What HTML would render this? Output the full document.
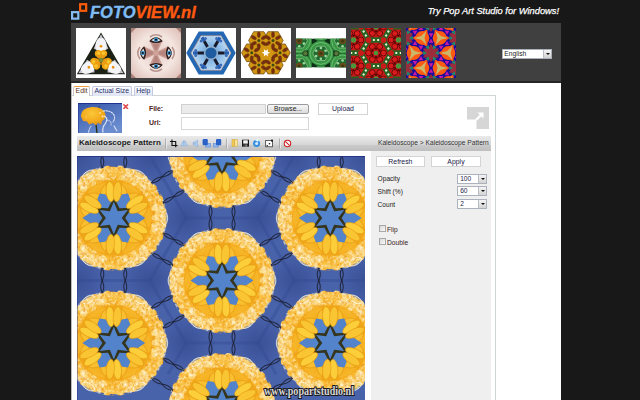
<!DOCTYPE html>
<html><head><meta charset="utf-8"><title>FOTOVIEW.nl</title>
<style>
*{margin:0;padding:0;box-sizing:border-box}
html,body{width:640px;height:400px;overflow:hidden}
body{background:#181818;font-family:"Liberation Sans",Arial,sans-serif;position:relative;color:#222}
.abs{position:absolute}
#logo{left:90px;top:1.5px;font-size:16.5px;font-weight:bold;font-style:italic;line-height:20px;letter-spacing:0;white-space:nowrap;color:#7fbcf6;-webkit-text-stroke:.35px #7fbcf6}
#logo b{color:#ff5a10;-webkit-text-stroke:.35px #ff5a10}
#sq1{left:71px;top:11px;width:8.5px;height:8.6px;border:2.2px solid #86bdf0}
#sq2{left:79px;top:3px;width:8.4px;height:8.8px;border:2.2px solid #ff5c0a}
#try{right:81px;top:4.6px;font-size:9.3px;font-style:italic;color:#fff;-webkit-text-stroke:.25px #fff;line-height:12px;white-space:nowrap}
#strip{left:71px;top:23px;width:490px;height:59px;background:#404040}
#stripsh{left:71px;top:81px;width:490px;height:2px;background:#262626}
.th{position:absolute;top:28px;width:50px;height:50px;overflow:hidden}
.th svg{display:block}
#lang{left:502px;top:48.5px;width:50px;height:10px;background:#fff;border:1px solid #aab0ba;font-size:6.7px;line-height:8px;padding-left:1.3px;color:#222}
#lang i{position:absolute;right:0;top:0;width:8px;height:8px;background:linear-gradient(#f4f4f4,#d0d0d0);border-left:1px solid #b8bcc4}
#lang i:after,.sel i:after{content:"";position:absolute;left:2px;top:3px;border:2px solid transparent;border-top:2.5px solid #111}
#main{left:71px;top:83px;width:490px;height:320px;background:#fff}
#leftb{left:71px;top:83px;width:1px;height:320px;background:#bbb}
#panel{left:72px;top:95px;width:424px;height:310px;border:1px solid #cfd4d7;border-left:none;border-bottom:none}
.tab{position:absolute;top:85.5px;height:10px;border:1px solid #c3c8de;border-bottom:none;border-radius:2px 2px 0 0;background:linear-gradient(#fdfdff,#dfe3f3);font-size:6.9px;line-height:8px;text-align:center;color:#26306a;white-space:nowrap}
#t1{left:73px;width:17px;background:#fff;border-color:#c8c8c8;border-top:1px solid #f0a040;color:#5a3020;height:10.5px}
#t2{left:92px;width:39.5px}
#t3{left:133.5px;width:19.5px}
#sf{left:77.8px;top:103px;width:44.3px;height:30px}
#redx{left:123.4px;top:103.5px;width:5.4px;height:5.4px}
.lbl{position:absolute;left:149px;font-size:6.9px;font-weight:bold;color:#4a2020;line-height:9px}
#fin{left:181.3px;top:104.4px;width:84.3px;height:9.4px;background:#ebebeb;border:1px solid #d0d0d0}
#browse{left:267.2px;top:104.4px;width:41.6px;height:9.4px;border:1px solid #9a9a9a;border-radius:2px;background:linear-gradient(#f6f6f6,#dcdcdc);font-size:6.7px;line-height:7.6px;text-align:center;color:#222}
#uin{left:181.3px;top:116.9px;width:127.5px;height:12.8px;background:#fff;border:1px solid #d8d8d8}
.btn{position:absolute;background:#fff;border:1px solid #d4d4d4;font-size:6.9px;text-align:center;color:#20204a}
#upload{left:318.1px;top:103px;width:49.8px;height:12px;line-height:9.8px}
#tb{left:77px;top:136px;width:413.5px;height:14.8px;background:linear-gradient(#ebebeb 0%,#d5d5d5 60%,#c8c8c8 64%,#bfbfbf 100%)}
#title{left:79px;top:137.2px;font-size:8px;font-weight:bold;line-height:12px;color:#1a1a1a;white-space:nowrap}
#crumb{left:377.5px;top:138px;width:111.3px;font-size:6.66px;line-height:10px;color:#333;white-space:nowrap;text-align:right}
#icons{left:164px;top:136px}
#kal{left:77px;top:156px}
#side{left:370.6px;top:150.8px;width:120px;height:250px;background:#efefef}
#refresh{left:375.5px;top:156.3px;width:49.8px;height:10.4px;line-height:9.4px}
#apply{left:431.3px;top:156.3px;width:49.4px;height:10.4px;line-height:9.4px}
.sl{position:absolute;left:377.6px;font-size:6.6px;line-height:9px;color:#222}
.sel{position:absolute;left:457.4px;width:29.6px;height:9.6px;background:#fff;border:1px solid #abb2bd;font-size:6.6px;line-height:7.8px;padding-left:1.8px;color:#1a1a4a}
.sel i{position:absolute;right:0;top:0;width:7.5px;height:7.6px;background:linear-gradient(#f4f4f4,#d4d4d4);border-left:1px solid #b8bcc4}
.sel i:after{left:1.6px;top:2.8px}
.cb{position:absolute;left:379.2px;width:6.4px;height:6.4px;border:1px solid #a8a8a8;background:linear-gradient(135deg,#d8d8d8,#fafafa)}
.cl{position:absolute;left:387px;font-size:6.7px;line-height:9px;color:#3a1a1a}
#arr{left:467px;top:107px}
</style></head><body>
<svg class="abs" style="left:68px;top:0" width="24" height="24" viewBox="68 0 24 24"><rect x="72.1" y="12.15" width="6.2" height="6.5" fill="none" stroke="#86bdf0" stroke-width="2.2"/><rect x="80.15" y="4.2" width="6.0" height="6.6" fill="none" stroke="#ff5c0a" stroke-width="2.2"/></svg>
<div class="abs" id="logo">FOTO<b>VIEW.nl</b></div>
<div class="abs" id="try">Try Pop Art Studio for Windows!</div>
<div class="abs" id="strip"></div><div class="abs" id="stripsh"></div>
<div class="th" style="left:76px"><svg width="50" height="50" viewBox="0 0 50 50"><rect width="50" height="50" fill="#fff"/><polygon points="25,4.6 0.8,46.2 49.2,46.2" fill="#1b2115"/><g transform="rotate(0 25 32.3)"><polygon points="25,6.2 17.6,20.5 25,24.6 32.4,20.5" fill="#c4c4cf"/><ellipse cx="22.6" cy="16" rx="3" ry="6.2" fill="#f4f4f8" transform="rotate(14 22.6 16)"/><ellipse cx="27.4" cy="16" rx="3" ry="6.2" fill="#f4f4f8" transform="rotate(-14 27.4 16)"/><ellipse cx="25" cy="20.6" rx="2.6" ry="3" fill="#fbfbfd"/><circle cx="25" cy="18.3" r="1.4" fill="#e8901a"/><circle cx="22.3" cy="25.6" r="3.5" fill="#f0a512"/><circle cx="27.7" cy="25.6" r="3.5" fill="#f0a512"/><ellipse cx="25" cy="28" rx="4.2" ry="3" fill="#eb9c10"/><circle cx="22.6" cy="25.2" r="1.7" fill="#f9c630"/><circle cx="27.4" cy="25.2" r="1.7" fill="#f9c630"/></g><g transform="rotate(120 25 32.3)"><polygon points="25,6.2 17.6,20.5 25,24.6 32.4,20.5" fill="#c4c4cf"/><ellipse cx="22.6" cy="16" rx="3" ry="6.2" fill="#f4f4f8" transform="rotate(14 22.6 16)"/><ellipse cx="27.4" cy="16" rx="3" ry="6.2" fill="#f4f4f8" transform="rotate(-14 27.4 16)"/><ellipse cx="25" cy="20.6" rx="2.6" ry="3" fill="#fbfbfd"/><circle cx="25" cy="18.3" r="1.4" fill="#e8901a"/><circle cx="22.3" cy="25.6" r="3.5" fill="#f0a512"/><circle cx="27.7" cy="25.6" r="3.5" fill="#f0a512"/><ellipse cx="25" cy="28" rx="4.2" ry="3" fill="#eb9c10"/><circle cx="22.6" cy="25.2" r="1.7" fill="#f9c630"/><circle cx="27.4" cy="25.2" r="1.7" fill="#f9c630"/></g><g transform="rotate(240 25 32.3)"><polygon points="25,6.2 17.6,20.5 25,24.6 32.4,20.5" fill="#c4c4cf"/><ellipse cx="22.6" cy="16" rx="3" ry="6.2" fill="#f4f4f8" transform="rotate(14 22.6 16)"/><ellipse cx="27.4" cy="16" rx="3" ry="6.2" fill="#f4f4f8" transform="rotate(-14 27.4 16)"/><ellipse cx="25" cy="20.6" rx="2.6" ry="3" fill="#fbfbfd"/><circle cx="25" cy="18.3" r="1.4" fill="#e8901a"/><circle cx="22.3" cy="25.6" r="3.5" fill="#f0a512"/><circle cx="27.7" cy="25.6" r="3.5" fill="#f0a512"/><ellipse cx="25" cy="28" rx="4.2" ry="3" fill="#eb9c10"/><circle cx="22.6" cy="25.2" r="1.7" fill="#f9c630"/><circle cx="27.4" cy="25.2" r="1.7" fill="#f9c630"/></g><circle cx="25" cy="32.1" r="2.3" fill="#7a8a34"/></svg></div><div class="th" style="left:131px"><svg width="50" height="50" viewBox="0 0 50 50"><defs><radialGradient id="skin" cx=".5" cy=".5" r=".72"><stop offset="0" stop-color="#e9d0c9"/><stop offset=".5" stop-color="#f4e6e1"/><stop offset=".85" stop-color="#e2c6be"/><stop offset="1" stop-color="#cfaaa0"/></radialGradient></defs><rect width="50" height="50" fill="url(#skin)"/><path d="M0 0H5L0 5ZM50 0H45L50 5ZM0 50H5L0 45ZM50 50H45L50 45Z" fill="#a88078"/><g transform="rotate(0 25 25)"><path d="M19 9 Q25 4.5 31 9" fill="none" stroke="#a98078" stroke-width="1.6" stroke-opacity=".8"/><path d="M23.6 24 L18.6 13 Q25 6 31.4 13 L26.4 24 Z" fill="#c99b93"/><path d="M24 22 L21.6 15.5 H28.4 L26 22 Z" fill="#b5847c"/><path d="M18.2 13.2 Q25 5.2 31.8 13.2 Q25 17 18.2 13.2Z" fill="#2c1b1a"/><path d="M20.4 12.3 Q25 8 29.6 12.3 Q25 14.8 20.4 12.3Z" fill="#eceff2"/><circle cx="25" cy="11.7" r="2.35" fill="#4690c2"/><circle cx="25" cy="11.7" r="1.05" fill="#0c1118"/></g><g transform="rotate(90 25 25)"><path d="M19 9 Q25 4.5 31 9" fill="none" stroke="#a98078" stroke-width="1.6" stroke-opacity=".8"/><path d="M23.6 24 L18.6 13 Q25 6 31.4 13 L26.4 24 Z" fill="#c99b93"/><path d="M24 22 L21.6 15.5 H28.4 L26 22 Z" fill="#b5847c"/><path d="M18.2 13.2 Q25 5.2 31.8 13.2 Q25 17 18.2 13.2Z" fill="#2c1b1a"/><path d="M20.4 12.3 Q25 8 29.6 12.3 Q25 14.8 20.4 12.3Z" fill="#eceff2"/><circle cx="25" cy="11.7" r="2.35" fill="#4690c2"/><circle cx="25" cy="11.7" r="1.05" fill="#0c1118"/></g><g transform="rotate(180 25 25)"><path d="M19 9 Q25 4.5 31 9" fill="none" stroke="#a98078" stroke-width="1.6" stroke-opacity=".8"/><path d="M23.6 24 L18.6 13 Q25 6 31.4 13 L26.4 24 Z" fill="#c99b93"/><path d="M24 22 L21.6 15.5 H28.4 L26 22 Z" fill="#b5847c"/><path d="M18.2 13.2 Q25 5.2 31.8 13.2 Q25 17 18.2 13.2Z" fill="#2c1b1a"/><path d="M20.4 12.3 Q25 8 29.6 12.3 Q25 14.8 20.4 12.3Z" fill="#eceff2"/><circle cx="25" cy="11.7" r="2.35" fill="#4690c2"/><circle cx="25" cy="11.7" r="1.05" fill="#0c1118"/></g><g transform="rotate(270 25 25)"><path d="M19 9 Q25 4.5 31 9" fill="none" stroke="#a98078" stroke-width="1.6" stroke-opacity=".8"/><path d="M23.6 24 L18.6 13 Q25 6 31.4 13 L26.4 24 Z" fill="#c99b93"/><path d="M24 22 L21.6 15.5 H28.4 L26 22 Z" fill="#b5847c"/><path d="M18.2 13.2 Q25 5.2 31.8 13.2 Q25 17 18.2 13.2Z" fill="#2c1b1a"/><path d="M20.4 12.3 Q25 8 29.6 12.3 Q25 14.8 20.4 12.3Z" fill="#eceff2"/><circle cx="25" cy="11.7" r="2.35" fill="#4690c2"/><circle cx="25" cy="11.7" r="1.05" fill="#0c1118"/></g><circle cx="25" cy="25" r="2.2" fill="#cfa199"/></svg></div><div class="th" style="left:186px"><svg width="50" height="50" viewBox="0 0 50 50"><defs><radialGradient id="t3g" cx="25" cy="25" r="20" gradientUnits="userSpaceOnUse"><stop offset="0" stop-color="#5f9ad4"/><stop offset=".5" stop-color="#8fbde8"/><stop offset="1" stop-color="#c9e0f5"/></radialGradient></defs><rect width="50" height="50" fill="#fff"/><polygon points="49.70,25.00 37.35,3.61 12.65,3.61 0.30,25.00 12.65,46.39 37.35,46.39" fill="#2468b4"/><polygon points="45.00,25.00 35.00,7.68 15.00,7.68 5.00,25.00 15.00,42.32 35.00,42.32" fill="url(#t3g)" stroke="#c98a6a" stroke-width=".5"/><line x1="38.5" y1="25.0" x2="43.0" y2="25.0" stroke="#2a5cae" stroke-width="3.2"/><line x1="30.0" y1="25.0" x2="38.5" y2="25.0" stroke="#17192a" stroke-width="3"/><circle cx="40.3" cy="27.4" r="1.5" fill="#3a6cb8"/><circle cx="40.3" cy="22.6" r="1.5" fill="#3a6cb8"/><line x1="31.8" y1="13.3" x2="34.0" y2="9.4" stroke="#2a5cae" stroke-width="3.2"/><line x1="27.5" y1="20.7" x2="31.8" y2="13.3" stroke="#17192a" stroke-width="3"/><circle cx="34.8" cy="13.0" r="1.5" fill="#3a6cb8"/><circle cx="30.6" cy="10.5" r="1.5" fill="#3a6cb8"/><line x1="18.3" y1="13.3" x2="16.0" y2="9.4" stroke="#2a5cae" stroke-width="3.2"/><line x1="22.5" y1="20.7" x2="18.3" y2="13.3" stroke="#17192a" stroke-width="3"/><circle cx="19.4" cy="10.5" r="1.5" fill="#3a6cb8"/><circle cx="15.2" cy="13.0" r="1.5" fill="#3a6cb8"/><line x1="11.5" y1="25.0" x2="7.0" y2="25.0" stroke="#2a5cae" stroke-width="3.2"/><line x1="20.0" y1="25.0" x2="11.5" y2="25.0" stroke="#17192a" stroke-width="3"/><circle cx="9.7" cy="22.6" r="1.5" fill="#3a6cb8"/><circle cx="9.7" cy="27.4" r="1.5" fill="#3a6cb8"/><line x1="18.2" y1="36.7" x2="16.0" y2="40.6" stroke="#2a5cae" stroke-width="3.2"/><line x1="22.5" y1="29.3" x2="18.2" y2="36.7" stroke="#17192a" stroke-width="3"/><circle cx="15.2" cy="37.0" r="1.5" fill="#3a6cb8"/><circle cx="19.4" cy="39.5" r="1.5" fill="#3a6cb8"/><line x1="31.8" y1="36.7" x2="34.0" y2="40.6" stroke="#2a5cae" stroke-width="3.2"/><line x1="27.5" y1="29.3" x2="31.8" y2="36.7" stroke="#17192a" stroke-width="3"/><circle cx="30.6" cy="39.5" r="1.5" fill="#3a6cb8"/><circle cx="34.8" cy="37.0" r="1.5" fill="#3a6cb8"/><circle cx="25" cy="25" r="7.2" fill="#8fb0d0"/><circle cx="25" cy="25" r="5.6" fill="#1f5c9f"/></svg></div><div class="th" style="left:241px"><svg width="50" height="50" viewBox="0 0 50 50"><rect width="50" height="50" fill="#fff"/><polygon points="49.30,24.80 44.20,15.97 34.00,15.97 28.90,24.80 34.00,33.63 44.20,33.63" fill="#d39612" stroke="#6a420a" stroke-width=".7"/><polygon points="42.20,12.50 37.10,3.67 26.90,3.67 21.80,12.50 26.90,21.34 37.10,21.34" fill="#d39612" stroke="#6a420a" stroke-width=".7"/><polygon points="28.00,12.50 22.90,3.67 12.70,3.67 7.60,12.50 12.70,21.34 22.90,21.34" fill="#d39612" stroke="#6a420a" stroke-width=".7"/><polygon points="20.90,24.80 15.80,15.97 5.60,15.97 0.50,24.80 5.60,33.63 15.80,33.63" fill="#d39612" stroke="#6a420a" stroke-width=".7"/><polygon points="28.00,37.10 22.90,28.26 12.70,28.26 7.60,37.10 12.70,45.93 22.90,45.93" fill="#d39612" stroke="#6a420a" stroke-width=".7"/><polygon points="42.20,37.10 37.10,28.26 26.90,28.26 21.80,37.10 26.90,45.93 37.10,45.93" fill="#d39612" stroke="#6a420a" stroke-width=".7"/><circle cx="24.9" cy="24.8" r="9" fill="#d39612"/><ellipse cx="44.2" cy="21.9" rx="2.9" ry="1.55" fill="#7c2a10" stroke="#5a400c" stroke-width=".5" transform="rotate(-30 44.2 21.9)"/><ellipse cx="39.1" cy="18.9" rx="2.9" ry="1.55" fill="#7c2a10" stroke="#5a400c" stroke-width=".5" transform="rotate(-90 39.1 18.9)"/><ellipse cx="34.0" cy="21.9" rx="2.9" ry="1.55" fill="#7c2a10" stroke="#5a400c" stroke-width=".5" transform="rotate(-150 34.0 21.9)"/><ellipse cx="34.0" cy="27.8" rx="2.9" ry="1.55" fill="#7c2a10" stroke="#5a400c" stroke-width=".5" transform="rotate(-210 34.0 27.8)"/><ellipse cx="39.1" cy="30.7" rx="2.9" ry="1.55" fill="#7c2a10" stroke="#5a400c" stroke-width=".5" transform="rotate(-270 39.1 30.7)"/><ellipse cx="44.2" cy="27.8" rx="2.9" ry="1.55" fill="#7c2a10" stroke="#5a400c" stroke-width=".5" transform="rotate(-330 44.2 27.8)"/><circle cx="39.1" cy="24.8" r="1.5" fill="#3c4a14"/><ellipse cx="37.1" cy="9.6" rx="2.9" ry="1.55" fill="#7c2a10" stroke="#5a400c" stroke-width=".5" transform="rotate(-30 37.1 9.6)"/><ellipse cx="32.0" cy="6.6" rx="2.9" ry="1.55" fill="#7c2a10" stroke="#5a400c" stroke-width=".5" transform="rotate(-90 32.0 6.6)"/><ellipse cx="26.9" cy="9.6" rx="2.9" ry="1.55" fill="#7c2a10" stroke="#5a400c" stroke-width=".5" transform="rotate(-150 26.9 9.6)"/><ellipse cx="26.9" cy="15.5" rx="2.9" ry="1.55" fill="#7c2a10" stroke="#5a400c" stroke-width=".5" transform="rotate(-210 26.9 15.5)"/><ellipse cx="32.0" cy="18.4" rx="2.9" ry="1.55" fill="#7c2a10" stroke="#5a400c" stroke-width=".5" transform="rotate(-270 32.0 18.4)"/><ellipse cx="37.1" cy="15.5" rx="2.9" ry="1.55" fill="#7c2a10" stroke="#5a400c" stroke-width=".5" transform="rotate(-330 37.1 15.5)"/><circle cx="32.0" cy="12.5" r="1.5" fill="#3c4a14"/><ellipse cx="22.9" cy="9.6" rx="2.9" ry="1.55" fill="#7c2a10" stroke="#5a400c" stroke-width=".5" transform="rotate(-30 22.9 9.6)"/><ellipse cx="17.8" cy="6.6" rx="2.9" ry="1.55" fill="#7c2a10" stroke="#5a400c" stroke-width=".5" transform="rotate(-90 17.8 6.6)"/><ellipse cx="12.7" cy="9.6" rx="2.9" ry="1.55" fill="#7c2a10" stroke="#5a400c" stroke-width=".5" transform="rotate(-150 12.7 9.6)"/><ellipse cx="12.7" cy="15.5" rx="2.9" ry="1.55" fill="#7c2a10" stroke="#5a400c" stroke-width=".5" transform="rotate(-210 12.7 15.5)"/><ellipse cx="17.8" cy="18.4" rx="2.9" ry="1.55" fill="#7c2a10" stroke="#5a400c" stroke-width=".5" transform="rotate(-270 17.8 18.4)"/><ellipse cx="22.9" cy="15.5" rx="2.9" ry="1.55" fill="#7c2a10" stroke="#5a400c" stroke-width=".5" transform="rotate(-330 22.9 15.5)"/><circle cx="17.8" cy="12.5" r="1.5" fill="#3c4a14"/><ellipse cx="15.8" cy="21.9" rx="2.9" ry="1.55" fill="#7c2a10" stroke="#5a400c" stroke-width=".5" transform="rotate(-30 15.8 21.9)"/><ellipse cx="10.7" cy="18.9" rx="2.9" ry="1.55" fill="#7c2a10" stroke="#5a400c" stroke-width=".5" transform="rotate(-90 10.7 18.9)"/><ellipse cx="5.6" cy="21.9" rx="2.9" ry="1.55" fill="#7c2a10" stroke="#5a400c" stroke-width=".5" transform="rotate(-150 5.6 21.9)"/><ellipse cx="5.6" cy="27.8" rx="2.9" ry="1.55" fill="#7c2a10" stroke="#5a400c" stroke-width=".5" transform="rotate(-210 5.6 27.8)"/><ellipse cx="10.7" cy="30.7" rx="2.9" ry="1.55" fill="#7c2a10" stroke="#5a400c" stroke-width=".5" transform="rotate(-270 10.7 30.7)"/><ellipse cx="15.8" cy="27.8" rx="2.9" ry="1.55" fill="#7c2a10" stroke="#5a400c" stroke-width=".5" transform="rotate(-330 15.8 27.8)"/><circle cx="10.7" cy="24.8" r="1.5" fill="#3c4a14"/><ellipse cx="22.9" cy="34.1" rx="2.9" ry="1.55" fill="#7c2a10" stroke="#5a400c" stroke-width=".5" transform="rotate(-30 22.9 34.1)"/><ellipse cx="17.8" cy="31.2" rx="2.9" ry="1.55" fill="#7c2a10" stroke="#5a400c" stroke-width=".5" transform="rotate(-90 17.8 31.2)"/><ellipse cx="12.7" cy="34.1" rx="2.9" ry="1.55" fill="#7c2a10" stroke="#5a400c" stroke-width=".5" transform="rotate(-150 12.7 34.1)"/><ellipse cx="12.7" cy="40.0" rx="2.9" ry="1.55" fill="#7c2a10" stroke="#5a400c" stroke-width=".5" transform="rotate(-210 12.7 40.0)"/><ellipse cx="17.8" cy="43.0" rx="2.9" ry="1.55" fill="#7c2a10" stroke="#5a400c" stroke-width=".5" transform="rotate(-270 17.8 43.0)"/><ellipse cx="22.9" cy="40.0" rx="2.9" ry="1.55" fill="#7c2a10" stroke="#5a400c" stroke-width=".5" transform="rotate(-330 22.9 40.0)"/><circle cx="17.8" cy="37.1" r="1.5" fill="#3c4a14"/><ellipse cx="37.1" cy="34.1" rx="2.9" ry="1.55" fill="#7c2a10" stroke="#5a400c" stroke-width=".5" transform="rotate(-30 37.1 34.1)"/><ellipse cx="32.0" cy="31.2" rx="2.9" ry="1.55" fill="#7c2a10" stroke="#5a400c" stroke-width=".5" transform="rotate(-90 32.0 31.2)"/><ellipse cx="26.9" cy="34.1" rx="2.9" ry="1.55" fill="#7c2a10" stroke="#5a400c" stroke-width=".5" transform="rotate(-150 26.9 34.1)"/><ellipse cx="26.9" cy="40.0" rx="2.9" ry="1.55" fill="#7c2a10" stroke="#5a400c" stroke-width=".5" transform="rotate(-210 26.9 40.0)"/><ellipse cx="32.0" cy="43.0" rx="2.9" ry="1.55" fill="#7c2a10" stroke="#5a400c" stroke-width=".5" transform="rotate(-270 32.0 43.0)"/><ellipse cx="37.1" cy="40.0" rx="2.9" ry="1.55" fill="#7c2a10" stroke="#5a400c" stroke-width=".5" transform="rotate(-330 37.1 40.0)"/><circle cx="32.0" cy="37.1" r="1.5" fill="#3c4a14"/><polygon points="29.10,24.80 26.63,23.80 27.00,21.16 24.90,22.80 22.80,21.16 23.17,23.80 20.70,24.80 23.17,25.80 22.80,28.44 24.90,26.80 27.00,28.44 26.63,25.80" fill="#fff"/></svg></div><div class="th" style="left:296px"><svg width="50" height="50" viewBox="0 0 50 50"><rect width="50" height="50" fill="#fff"/><svg x="0" y="10.8" width="50" height="28.4" viewBox="0 10.8 50 28.4"><rect x="0" y="10" width="50" height="30" fill="#0f3018"/><polygon points="37.36,22.06 34.02,16.28 28.24,12.94 21.56,12.94 15.78,16.28 12.44,22.06 12.44,28.74 15.78,34.52 21.56,37.86 28.24,37.86 34.02,34.52 37.36,28.74" fill="#3a9645"/><polygon points="35.90,25.40 34.43,19.90 30.40,15.87 24.90,14.40 19.40,15.87 15.37,19.90 13.90,25.40 15.37,30.90 19.40,34.93 24.90,36.40 30.40,34.93 34.43,30.90" fill="none" stroke="#6cc474" stroke-width=".9"/><polygon points="33.10,25.40 29.00,18.30 20.80,18.30 16.70,25.40 20.80,32.50 29.00,32.50" fill="#1f6a30" stroke="#a8dca0" stroke-width=".6"/><circle cx="29.6" cy="22.7" r="1.3" fill="#9ad89a"/><circle cx="24.9" cy="20.0" r="1.3" fill="#9ad89a"/><circle cx="20.2" cy="22.7" r="1.3" fill="#9ad89a"/><circle cx="20.2" cy="28.1" r="1.3" fill="#9ad89a"/><circle cx="24.9" cy="30.8" r="1.3" fill="#9ad89a"/><circle cx="29.6" cy="28.1" r="1.3" fill="#9ad89a"/><circle cx="24.9" cy="25.4" r="3.2" fill="#6b4a1a"/><circle cx="24.9" cy="25.4" r="1.5" fill="#3c3a14"/><polygon points="59.01,9.56 55.67,3.78 49.89,0.44 43.21,0.44 37.43,3.78 34.09,9.56 34.09,16.24 37.43,22.02 43.21,25.36 49.89,25.36 55.67,22.02 59.01,16.24" fill="#3a9645"/><polygon points="57.55,12.90 56.08,7.40 52.05,3.37 46.55,1.90 41.05,3.37 37.02,7.40 35.55,12.90 37.02,18.40 41.05,22.43 46.55,23.90 52.05,22.43 56.08,18.40" fill="none" stroke="#6cc474" stroke-width=".9"/><polygon points="54.75,12.90 50.65,5.80 42.45,5.80 38.35,12.90 42.45,20.00 50.65,20.00" fill="#1f6a30" stroke="#a8dca0" stroke-width=".6"/><circle cx="51.2" cy="10.2" r="1.3" fill="#9ad89a"/><circle cx="46.6" cy="7.5" r="1.3" fill="#9ad89a"/><circle cx="41.9" cy="10.2" r="1.3" fill="#9ad89a"/><circle cx="41.9" cy="15.6" r="1.3" fill="#9ad89a"/><circle cx="46.6" cy="18.3" r="1.3" fill="#9ad89a"/><circle cx="51.2" cy="15.6" r="1.3" fill="#9ad89a"/><circle cx="46.6" cy="12.9" r="3.2" fill="#6b4a1a"/><circle cx="46.6" cy="12.9" r="1.5" fill="#3c3a14"/><polygon points="37.36,-2.94 34.02,-8.72 28.24,-12.06 21.56,-12.06 15.78,-8.72 12.44,-2.94 12.44,3.74 15.78,9.52 21.56,12.86 28.24,12.86 34.02,9.52 37.36,3.74" fill="#3a9645"/><polygon points="35.90,0.40 34.43,-5.10 30.40,-9.13 24.90,-10.60 19.40,-9.13 15.37,-5.10 13.90,0.40 15.37,5.90 19.40,9.93 24.90,11.40 30.40,9.93 34.43,5.90" fill="none" stroke="#6cc474" stroke-width=".9"/><polygon points="33.10,0.40 29.00,-6.70 20.80,-6.70 16.70,0.40 20.80,7.50 29.00,7.50" fill="#1f6a30" stroke="#a8dca0" stroke-width=".6"/><circle cx="29.6" cy="-2.3" r="1.3" fill="#9ad89a"/><circle cx="24.9" cy="-5.0" r="1.3" fill="#9ad89a"/><circle cx="20.2" cy="-2.3" r="1.3" fill="#9ad89a"/><circle cx="20.2" cy="3.1" r="1.3" fill="#9ad89a"/><circle cx="24.9" cy="5.8" r="1.3" fill="#9ad89a"/><circle cx="29.6" cy="3.1" r="1.3" fill="#9ad89a"/><circle cx="24.9" cy="0.4" r="3.2" fill="#6b4a1a"/><circle cx="24.9" cy="0.4" r="1.5" fill="#3c3a14"/><polygon points="15.71,9.56 12.37,3.78 6.59,0.44 -0.09,0.44 -5.87,3.78 -9.21,9.56 -9.21,16.24 -5.87,22.02 -0.09,25.36 6.59,25.36 12.37,22.02 15.71,16.24" fill="#3a9645"/><polygon points="14.25,12.90 12.78,7.40 8.75,3.37 3.25,1.90 -2.25,3.37 -6.28,7.40 -7.75,12.90 -6.28,18.40 -2.25,22.43 3.25,23.90 8.75,22.43 12.78,18.40" fill="none" stroke="#6cc474" stroke-width=".9"/><polygon points="11.45,12.90 7.35,5.80 -0.85,5.80 -4.95,12.90 -0.85,20.00 7.35,20.00" fill="#1f6a30" stroke="#a8dca0" stroke-width=".6"/><circle cx="7.9" cy="10.2" r="1.3" fill="#9ad89a"/><circle cx="3.2" cy="7.5" r="1.3" fill="#9ad89a"/><circle cx="-1.4" cy="10.2" r="1.3" fill="#9ad89a"/><circle cx="-1.4" cy="15.6" r="1.3" fill="#9ad89a"/><circle cx="3.2" cy="18.3" r="1.3" fill="#9ad89a"/><circle cx="7.9" cy="15.6" r="1.3" fill="#9ad89a"/><circle cx="3.2" cy="12.9" r="3.2" fill="#6b4a1a"/><circle cx="3.2" cy="12.9" r="1.5" fill="#3c3a14"/><polygon points="15.71,34.56 12.37,28.78 6.59,25.44 -0.09,25.44 -5.87,28.78 -9.21,34.56 -9.21,41.24 -5.87,47.02 -0.09,50.36 6.59,50.36 12.37,47.02 15.71,41.24" fill="#3a9645"/><polygon points="14.25,37.90 12.78,32.40 8.75,28.37 3.25,26.90 -2.25,28.37 -6.28,32.40 -7.75,37.90 -6.28,43.40 -2.25,47.43 3.25,48.90 8.75,47.43 12.78,43.40" fill="none" stroke="#6cc474" stroke-width=".9"/><polygon points="11.45,37.90 7.35,30.80 -0.85,30.80 -4.95,37.90 -0.85,45.00 7.35,45.00" fill="#1f6a30" stroke="#a8dca0" stroke-width=".6"/><circle cx="7.9" cy="35.2" r="1.3" fill="#9ad89a"/><circle cx="3.2" cy="32.5" r="1.3" fill="#9ad89a"/><circle cx="-1.4" cy="35.2" r="1.3" fill="#9ad89a"/><circle cx="-1.4" cy="40.6" r="1.3" fill="#9ad89a"/><circle cx="3.2" cy="43.3" r="1.3" fill="#9ad89a"/><circle cx="7.9" cy="40.6" r="1.3" fill="#9ad89a"/><circle cx="3.2" cy="37.9" r="3.2" fill="#6b4a1a"/><circle cx="3.2" cy="37.9" r="1.5" fill="#3c3a14"/><polygon points="37.36,47.06 34.02,41.28 28.24,37.94 21.56,37.94 15.78,41.28 12.44,47.06 12.44,53.74 15.78,59.52 21.56,62.86 28.24,62.86 34.02,59.52 37.36,53.74" fill="#3a9645"/><polygon points="35.90,50.40 34.43,44.90 30.40,40.87 24.90,39.40 19.40,40.87 15.37,44.90 13.90,50.40 15.37,55.90 19.40,59.93 24.90,61.40 30.40,59.93 34.43,55.90" fill="none" stroke="#6cc474" stroke-width=".9"/><polygon points="33.10,50.40 29.00,43.30 20.80,43.30 16.70,50.40 20.80,57.50 29.00,57.50" fill="#1f6a30" stroke="#a8dca0" stroke-width=".6"/><circle cx="29.6" cy="47.7" r="1.3" fill="#9ad89a"/><circle cx="24.9" cy="45.0" r="1.3" fill="#9ad89a"/><circle cx="20.2" cy="47.7" r="1.3" fill="#9ad89a"/><circle cx="20.2" cy="53.1" r="1.3" fill="#9ad89a"/><circle cx="24.9" cy="55.8" r="1.3" fill="#9ad89a"/><circle cx="29.6" cy="53.1" r="1.3" fill="#9ad89a"/><circle cx="24.9" cy="50.4" r="3.2" fill="#6b4a1a"/><circle cx="24.9" cy="50.4" r="1.5" fill="#3c3a14"/><polygon points="59.01,34.56 55.67,28.78 49.89,25.44 43.21,25.44 37.43,28.78 34.09,34.56 34.09,41.24 37.43,47.02 43.21,50.36 49.89,50.36 55.67,47.02 59.01,41.24" fill="#3a9645"/><polygon points="57.55,37.90 56.08,32.40 52.05,28.37 46.55,26.90 41.05,28.37 37.02,32.40 35.55,37.90 37.02,43.40 41.05,47.43 46.55,48.90 52.05,47.43 56.08,43.40" fill="none" stroke="#6cc474" stroke-width=".9"/><polygon points="54.75,37.90 50.65,30.80 42.45,30.80 38.35,37.90 42.45,45.00 50.65,45.00" fill="#1f6a30" stroke="#a8dca0" stroke-width=".6"/><circle cx="51.2" cy="35.2" r="1.3" fill="#9ad89a"/><circle cx="46.6" cy="32.5" r="1.3" fill="#9ad89a"/><circle cx="41.9" cy="35.2" r="1.3" fill="#9ad89a"/><circle cx="41.9" cy="40.6" r="1.3" fill="#9ad89a"/><circle cx="46.6" cy="43.3" r="1.3" fill="#9ad89a"/><circle cx="51.2" cy="40.6" r="1.3" fill="#9ad89a"/><circle cx="46.6" cy="37.9" r="3.2" fill="#6b4a1a"/><circle cx="46.6" cy="37.9" r="1.5" fill="#3c3a14"/><circle cx="40.5" cy="25.4" r="2.6" fill="#54783a" stroke="#1c3a1a" stroke-width=".9"/><circle cx="9.3" cy="25.4" r="2.6" fill="#54783a" stroke="#1c3a1a" stroke-width=".9"/></svg></svg></div><div class="th" style="left:351px"><svg width="50" height="50" viewBox="0 0 50 50"><rect width="50" height="50" fill="#c41616"/><polygon points="40.01,25.00 32.51,12.00 17.49,12.00 9.99,25.00 17.49,38.00 32.51,38.00" fill="none" stroke="#2a6220" stroke-width="4.8"/><polygon points="62.53,12.00 55.02,-1.00 40.01,-1.00 32.51,12.00 40.01,25.00 55.02,25.00" fill="none" stroke="#2a6220" stroke-width="4.8"/><polygon points="40.01,-1.00 32.51,-14.00 17.49,-14.00 9.99,-1.00 17.49,12.00 32.51,12.00" fill="none" stroke="#2a6220" stroke-width="4.8"/><polygon points="17.49,12.00 9.99,-1.00 -5.02,-1.00 -12.53,12.00 -5.02,25.00 9.99,25.00" fill="none" stroke="#2a6220" stroke-width="4.8"/><polygon points="17.49,38.00 9.99,25.00 -5.02,25.00 -12.53,38.00 -5.02,51.00 9.99,51.00" fill="none" stroke="#2a6220" stroke-width="4.8"/><polygon points="40.01,51.00 32.51,38.00 17.49,38.00 9.99,51.00 17.49,64.00 32.51,64.00" fill="none" stroke="#2a6220" stroke-width="4.8"/><polygon points="62.53,38.00 55.02,25.00 40.01,25.00 32.51,38.00 40.01,51.00 55.02,51.00" fill="none" stroke="#2a6220" stroke-width="4.8"/><circle cx="40.0" cy="25.0" r="2.6" fill="#cc1a1a"/><circle cx="32.5" cy="12.0" r="2.6" fill="#cc1a1a"/><circle cx="17.5" cy="12.0" r="2.6" fill="#cc1a1a"/><circle cx="10.0" cy="25.0" r="2.6" fill="#cc1a1a"/><circle cx="17.5" cy="38.0" r="2.6" fill="#cc1a1a"/><circle cx="32.5" cy="38.0" r="2.6" fill="#cc1a1a"/><circle cx="62.5" cy="12.0" r="2.6" fill="#cc1a1a"/><circle cx="55.0" cy="-1.0" r="2.6" fill="#cc1a1a"/><circle cx="40.0" cy="-1.0" r="2.6" fill="#cc1a1a"/><circle cx="32.5" cy="12.0" r="2.6" fill="#cc1a1a"/><circle cx="40.0" cy="25.0" r="2.6" fill="#cc1a1a"/><circle cx="55.0" cy="25.0" r="2.6" fill="#cc1a1a"/><circle cx="40.0" cy="-1.0" r="2.6" fill="#cc1a1a"/><circle cx="32.5" cy="-14.0" r="2.6" fill="#cc1a1a"/><circle cx="17.5" cy="-14.0" r="2.6" fill="#cc1a1a"/><circle cx="10.0" cy="-1.0" r="2.6" fill="#cc1a1a"/><circle cx="17.5" cy="12.0" r="2.6" fill="#cc1a1a"/><circle cx="32.5" cy="12.0" r="2.6" fill="#cc1a1a"/><circle cx="17.5" cy="12.0" r="2.6" fill="#cc1a1a"/><circle cx="10.0" cy="-1.0" r="2.6" fill="#cc1a1a"/><circle cx="-5.0" cy="-1.0" r="2.6" fill="#cc1a1a"/><circle cx="-12.5" cy="12.0" r="2.6" fill="#cc1a1a"/><circle cx="-5.0" cy="25.0" r="2.6" fill="#cc1a1a"/><circle cx="10.0" cy="25.0" r="2.6" fill="#cc1a1a"/><circle cx="17.5" cy="38.0" r="2.6" fill="#cc1a1a"/><circle cx="10.0" cy="25.0" r="2.6" fill="#cc1a1a"/><circle cx="-5.0" cy="25.0" r="2.6" fill="#cc1a1a"/><circle cx="-12.5" cy="38.0" r="2.6" fill="#cc1a1a"/><circle cx="-5.0" cy="51.0" r="2.6" fill="#cc1a1a"/><circle cx="10.0" cy="51.0" r="2.6" fill="#cc1a1a"/><circle cx="40.0" cy="51.0" r="2.6" fill="#cc1a1a"/><circle cx="32.5" cy="38.0" r="2.6" fill="#cc1a1a"/><circle cx="17.5" cy="38.0" r="2.6" fill="#cc1a1a"/><circle cx="10.0" cy="51.0" r="2.6" fill="#cc1a1a"/><circle cx="17.5" cy="64.0" r="2.6" fill="#cc1a1a"/><circle cx="32.5" cy="64.0" r="2.6" fill="#cc1a1a"/><circle cx="62.5" cy="38.0" r="2.6" fill="#cc1a1a"/><circle cx="55.0" cy="25.0" r="2.6" fill="#cc1a1a"/><circle cx="40.0" cy="25.0" r="2.6" fill="#cc1a1a"/><circle cx="32.5" cy="38.0" r="2.6" fill="#cc1a1a"/><circle cx="40.0" cy="51.0" r="2.6" fill="#cc1a1a"/><circle cx="55.0" cy="51.0" r="2.6" fill="#cc1a1a"/><circle cx="31.6" cy="25.0" r="4.4" fill="#d81c1c"/><circle cx="28.3" cy="19.3" r="4.4" fill="#d81c1c"/><circle cx="21.7" cy="19.3" r="4.4" fill="#d81c1c"/><circle cx="18.4" cy="25.0" r="4.4" fill="#d81c1c"/><circle cx="21.7" cy="30.7" r="4.4" fill="#d81c1c"/><circle cx="28.3" cy="30.7" r="4.4" fill="#d81c1c"/><circle cx="25.0" cy="25.0" r="6" fill="#c81414"/><circle cx="32.4" cy="25.0" r="3" fill="none" stroke="#4a0606" stroke-width=".8"/><circle cx="28.6" cy="22.9" r="1.1" fill="#5a0808"/><circle cx="28.7" cy="18.6" r="3" fill="none" stroke="#4a0606" stroke-width=".8"/><circle cx="25.0" cy="20.8" r="1.1" fill="#5a0808"/><circle cx="21.3" cy="18.6" r="3" fill="none" stroke="#4a0606" stroke-width=".8"/><circle cx="21.4" cy="22.9" r="1.1" fill="#5a0808"/><circle cx="17.6" cy="25.0" r="3" fill="none" stroke="#4a0606" stroke-width=".8"/><circle cx="21.4" cy="27.1" r="1.1" fill="#5a0808"/><circle cx="21.3" cy="31.4" r="3" fill="none" stroke="#4a0606" stroke-width=".8"/><circle cx="25.0" cy="29.2" r="1.1" fill="#5a0808"/><circle cx="28.7" cy="31.4" r="3" fill="none" stroke="#4a0606" stroke-width=".8"/><circle cx="28.6" cy="27.1" r="1.1" fill="#5a0808"/><circle cx="25.0" cy="25.0" r="2.3" fill="#4a963c"/><circle cx="54.1" cy="12.0" r="4.4" fill="#d81c1c"/><circle cx="50.8" cy="6.3" r="4.4" fill="#d81c1c"/><circle cx="44.2" cy="6.3" r="4.4" fill="#d81c1c"/><circle cx="40.9" cy="12.0" r="4.4" fill="#d81c1c"/><circle cx="44.2" cy="17.7" r="4.4" fill="#d81c1c"/><circle cx="50.8" cy="17.7" r="4.4" fill="#d81c1c"/><circle cx="47.5" cy="12.0" r="6" fill="#c81414"/><circle cx="54.9" cy="12.0" r="3" fill="none" stroke="#4a0606" stroke-width=".8"/><circle cx="51.2" cy="9.9" r="1.1" fill="#5a0808"/><circle cx="51.2" cy="5.6" r="3" fill="none" stroke="#4a0606" stroke-width=".8"/><circle cx="47.5" cy="7.8" r="1.1" fill="#5a0808"/><circle cx="43.8" cy="5.6" r="3" fill="none" stroke="#4a0606" stroke-width=".8"/><circle cx="43.9" cy="9.9" r="1.1" fill="#5a0808"/><circle cx="40.1" cy="12.0" r="3" fill="none" stroke="#4a0606" stroke-width=".8"/><circle cx="43.9" cy="14.1" r="1.1" fill="#5a0808"/><circle cx="43.8" cy="18.4" r="3" fill="none" stroke="#4a0606" stroke-width=".8"/><circle cx="47.5" cy="16.2" r="1.1" fill="#5a0808"/><circle cx="51.2" cy="18.4" r="3" fill="none" stroke="#4a0606" stroke-width=".8"/><circle cx="51.2" cy="14.1" r="1.1" fill="#5a0808"/><circle cx="47.5" cy="12.0" r="2.7" fill="#4a963c"/><circle cx="31.6" cy="-1.0" r="4.4" fill="#d81c1c"/><circle cx="28.3" cy="-6.7" r="4.4" fill="#d81c1c"/><circle cx="21.7" cy="-6.7" r="4.4" fill="#d81c1c"/><circle cx="18.4" cy="-1.0" r="4.4" fill="#d81c1c"/><circle cx="21.7" cy="4.7" r="4.4" fill="#d81c1c"/><circle cx="28.3" cy="4.7" r="4.4" fill="#d81c1c"/><circle cx="25.0" cy="-1.0" r="6" fill="#c81414"/><circle cx="32.4" cy="-1.0" r="3" fill="none" stroke="#4a0606" stroke-width=".8"/><circle cx="28.6" cy="-3.1" r="1.1" fill="#5a0808"/><circle cx="28.7" cy="-7.4" r="3" fill="none" stroke="#4a0606" stroke-width=".8"/><circle cx="25.0" cy="-5.2" r="1.1" fill="#5a0808"/><circle cx="21.3" cy="-7.4" r="3" fill="none" stroke="#4a0606" stroke-width=".8"/><circle cx="21.4" cy="-3.1" r="1.1" fill="#5a0808"/><circle cx="17.6" cy="-1.0" r="3" fill="none" stroke="#4a0606" stroke-width=".8"/><circle cx="21.4" cy="1.1" r="1.1" fill="#5a0808"/><circle cx="21.3" cy="5.4" r="3" fill="none" stroke="#4a0606" stroke-width=".8"/><circle cx="25.0" cy="3.2" r="1.1" fill="#5a0808"/><circle cx="28.7" cy="5.4" r="3" fill="none" stroke="#4a0606" stroke-width=".8"/><circle cx="28.6" cy="1.1" r="1.1" fill="#5a0808"/><circle cx="25.0" cy="-1.0" r="2.7" fill="#4a963c"/><circle cx="9.1" cy="12.0" r="4.4" fill="#d81c1c"/><circle cx="5.8" cy="6.3" r="4.4" fill="#d81c1c"/><circle cx="-0.8" cy="6.3" r="4.4" fill="#d81c1c"/><circle cx="-4.1" cy="12.0" r="4.4" fill="#d81c1c"/><circle cx="-0.8" cy="17.7" r="4.4" fill="#d81c1c"/><circle cx="5.8" cy="17.7" r="4.4" fill="#d81c1c"/><circle cx="2.5" cy="12.0" r="6" fill="#c81414"/><circle cx="9.9" cy="12.0" r="3" fill="none" stroke="#4a0606" stroke-width=".8"/><circle cx="6.1" cy="9.9" r="1.1" fill="#5a0808"/><circle cx="6.2" cy="5.6" r="3" fill="none" stroke="#4a0606" stroke-width=".8"/><circle cx="2.5" cy="7.8" r="1.1" fill="#5a0808"/><circle cx="-1.2" cy="5.6" r="3" fill="none" stroke="#4a0606" stroke-width=".8"/><circle cx="-1.2" cy="9.9" r="1.1" fill="#5a0808"/><circle cx="-4.9" cy="12.0" r="3" fill="none" stroke="#4a0606" stroke-width=".8"/><circle cx="-1.2" cy="14.1" r="1.1" fill="#5a0808"/><circle cx="-1.2" cy="18.4" r="3" fill="none" stroke="#4a0606" stroke-width=".8"/><circle cx="2.5" cy="16.2" r="1.1" fill="#5a0808"/><circle cx="6.2" cy="18.4" r="3" fill="none" stroke="#4a0606" stroke-width=".8"/><circle cx="6.1" cy="14.1" r="1.1" fill="#5a0808"/><circle cx="2.5" cy="12.0" r="2.7" fill="#4a963c"/><circle cx="9.1" cy="38.0" r="4.4" fill="#d81c1c"/><circle cx="5.8" cy="32.3" r="4.4" fill="#d81c1c"/><circle cx="-0.8" cy="32.3" r="4.4" fill="#d81c1c"/><circle cx="-4.1" cy="38.0" r="4.4" fill="#d81c1c"/><circle cx="-0.8" cy="43.7" r="4.4" fill="#d81c1c"/><circle cx="5.8" cy="43.7" r="4.4" fill="#d81c1c"/><circle cx="2.5" cy="38.0" r="6" fill="#c81414"/><circle cx="9.9" cy="38.0" r="3" fill="none" stroke="#4a0606" stroke-width=".8"/><circle cx="6.1" cy="35.9" r="1.1" fill="#5a0808"/><circle cx="6.2" cy="31.6" r="3" fill="none" stroke="#4a0606" stroke-width=".8"/><circle cx="2.5" cy="33.8" r="1.1" fill="#5a0808"/><circle cx="-1.2" cy="31.6" r="3" fill="none" stroke="#4a0606" stroke-width=".8"/><circle cx="-1.2" cy="35.9" r="1.1" fill="#5a0808"/><circle cx="-4.9" cy="38.0" r="3" fill="none" stroke="#4a0606" stroke-width=".8"/><circle cx="-1.2" cy="40.1" r="1.1" fill="#5a0808"/><circle cx="-1.2" cy="44.4" r="3" fill="none" stroke="#4a0606" stroke-width=".8"/><circle cx="2.5" cy="42.2" r="1.1" fill="#5a0808"/><circle cx="6.2" cy="44.4" r="3" fill="none" stroke="#4a0606" stroke-width=".8"/><circle cx="6.1" cy="40.1" r="1.1" fill="#5a0808"/><circle cx="2.5" cy="38.0" r="2.7" fill="#4a963c"/><circle cx="31.6" cy="51.0" r="4.4" fill="#d81c1c"/><circle cx="28.3" cy="45.3" r="4.4" fill="#d81c1c"/><circle cx="21.7" cy="45.3" r="4.4" fill="#d81c1c"/><circle cx="18.4" cy="51.0" r="4.4" fill="#d81c1c"/><circle cx="21.7" cy="56.7" r="4.4" fill="#d81c1c"/><circle cx="28.3" cy="56.7" r="4.4" fill="#d81c1c"/><circle cx="25.0" cy="51.0" r="6" fill="#c81414"/><circle cx="32.4" cy="51.0" r="3" fill="none" stroke="#4a0606" stroke-width=".8"/><circle cx="28.6" cy="48.9" r="1.1" fill="#5a0808"/><circle cx="28.7" cy="44.6" r="3" fill="none" stroke="#4a0606" stroke-width=".8"/><circle cx="25.0" cy="46.8" r="1.1" fill="#5a0808"/><circle cx="21.3" cy="44.6" r="3" fill="none" stroke="#4a0606" stroke-width=".8"/><circle cx="21.4" cy="48.9" r="1.1" fill="#5a0808"/><circle cx="17.6" cy="51.0" r="3" fill="none" stroke="#4a0606" stroke-width=".8"/><circle cx="21.4" cy="53.1" r="1.1" fill="#5a0808"/><circle cx="21.3" cy="57.4" r="3" fill="none" stroke="#4a0606" stroke-width=".8"/><circle cx="25.0" cy="55.2" r="1.1" fill="#5a0808"/><circle cx="28.7" cy="57.4" r="3" fill="none" stroke="#4a0606" stroke-width=".8"/><circle cx="28.6" cy="53.1" r="1.1" fill="#5a0808"/><circle cx="25.0" cy="51.0" r="2.7" fill="#4a963c"/><circle cx="54.1" cy="38.0" r="4.4" fill="#d81c1c"/><circle cx="50.8" cy="32.3" r="4.4" fill="#d81c1c"/><circle cx="44.2" cy="32.3" r="4.4" fill="#d81c1c"/><circle cx="40.9" cy="38.0" r="4.4" fill="#d81c1c"/><circle cx="44.2" cy="43.7" r="4.4" fill="#d81c1c"/><circle cx="50.8" cy="43.7" r="4.4" fill="#d81c1c"/><circle cx="47.5" cy="38.0" r="6" fill="#c81414"/><circle cx="54.9" cy="38.0" r="3" fill="none" stroke="#4a0606" stroke-width=".8"/><circle cx="51.2" cy="35.9" r="1.1" fill="#5a0808"/><circle cx="51.2" cy="31.6" r="3" fill="none" stroke="#4a0606" stroke-width=".8"/><circle cx="47.5" cy="33.8" r="1.1" fill="#5a0808"/><circle cx="43.8" cy="31.6" r="3" fill="none" stroke="#4a0606" stroke-width=".8"/><circle cx="43.9" cy="35.9" r="1.1" fill="#5a0808"/><circle cx="40.1" cy="38.0" r="3" fill="none" stroke="#4a0606" stroke-width=".8"/><circle cx="43.9" cy="40.1" r="1.1" fill="#5a0808"/><circle cx="43.8" cy="44.4" r="3" fill="none" stroke="#4a0606" stroke-width=".8"/><circle cx="47.5" cy="42.2" r="1.1" fill="#5a0808"/><circle cx="51.2" cy="44.4" r="3" fill="none" stroke="#4a0606" stroke-width=".8"/><circle cx="51.2" cy="40.1" r="1.1" fill="#5a0808"/><circle cx="47.5" cy="38.0" r="2.7" fill="#4a963c"/><circle cx="37.4" cy="20.4" r="1.0" fill="#e6eedc"/><circle cx="35.2" cy="16.6" r="1.0" fill="#e6eedc"/><circle cx="27.2" cy="12.0" r="1.0" fill="#e6eedc"/><circle cx="22.8" cy="12.0" r="1.0" fill="#e6eedc"/><circle cx="14.8" cy="16.6" r="1.0" fill="#e6eedc"/><circle cx="12.6" cy="20.4" r="1.0" fill="#e6eedc"/><circle cx="12.6" cy="29.6" r="1.0" fill="#e6eedc"/><circle cx="14.8" cy="33.4" r="1.0" fill="#e6eedc"/><circle cx="22.8" cy="38.0" r="1.0" fill="#e6eedc"/><circle cx="27.2" cy="38.0" r="1.0" fill="#e6eedc"/><circle cx="35.2" cy="33.4" r="1.0" fill="#e6eedc"/><circle cx="37.4" cy="29.6" r="1.0" fill="#e6eedc"/><circle cx="59.9" cy="7.4" r="1.0" fill="#e6eedc"/><circle cx="57.7" cy="3.6" r="1.0" fill="#e6eedc"/><circle cx="49.7" cy="-1.0" r="1.0" fill="#e6eedc"/><circle cx="45.3" cy="-1.0" r="1.0" fill="#e6eedc"/><circle cx="37.4" cy="3.6" r="1.0" fill="#e6eedc"/><circle cx="35.2" cy="7.4" r="1.0" fill="#e6eedc"/><circle cx="35.2" cy="16.6" r="1.0" fill="#e6eedc"/><circle cx="37.4" cy="20.4" r="1.0" fill="#e6eedc"/><circle cx="45.3" cy="25.0" r="1.0" fill="#e6eedc"/><circle cx="49.7" cy="25.0" r="1.0" fill="#e6eedc"/><circle cx="57.7" cy="20.4" r="1.0" fill="#e6eedc"/><circle cx="59.9" cy="16.6" r="1.0" fill="#e6eedc"/><circle cx="37.4" cy="-5.6" r="1.0" fill="#e6eedc"/><circle cx="35.2" cy="-9.4" r="1.0" fill="#e6eedc"/><circle cx="27.2" cy="-14.0" r="1.0" fill="#e6eedc"/><circle cx="22.8" cy="-14.0" r="1.0" fill="#e6eedc"/><circle cx="14.8" cy="-9.4" r="1.0" fill="#e6eedc"/><circle cx="12.6" cy="-5.6" r="1.0" fill="#e6eedc"/><circle cx="12.6" cy="3.6" r="1.0" fill="#e6eedc"/><circle cx="14.8" cy="7.4" r="1.0" fill="#e6eedc"/><circle cx="22.8" cy="12.0" r="1.0" fill="#e6eedc"/><circle cx="27.2" cy="12.0" r="1.0" fill="#e6eedc"/><circle cx="35.2" cy="7.4" r="1.0" fill="#e6eedc"/><circle cx="37.4" cy="3.6" r="1.0" fill="#e6eedc"/><circle cx="14.8" cy="7.4" r="1.0" fill="#e6eedc"/><circle cx="12.6" cy="3.6" r="1.0" fill="#e6eedc"/><circle cx="4.7" cy="-1.0" r="1.0" fill="#e6eedc"/><circle cx="0.3" cy="-1.0" r="1.0" fill="#e6eedc"/><circle cx="-7.7" cy="3.6" r="1.0" fill="#e6eedc"/><circle cx="-9.9" cy="7.4" r="1.0" fill="#e6eedc"/><circle cx="-9.9" cy="16.6" r="1.0" fill="#e6eedc"/><circle cx="-7.7" cy="20.4" r="1.0" fill="#e6eedc"/><circle cx="0.3" cy="25.0" r="1.0" fill="#e6eedc"/><circle cx="4.7" cy="25.0" r="1.0" fill="#e6eedc"/><circle cx="12.6" cy="20.4" r="1.0" fill="#e6eedc"/><circle cx="14.8" cy="16.6" r="1.0" fill="#e6eedc"/><circle cx="14.8" cy="33.4" r="1.0" fill="#e6eedc"/><circle cx="12.6" cy="29.6" r="1.0" fill="#e6eedc"/><circle cx="4.7" cy="25.0" r="1.0" fill="#e6eedc"/><circle cx="0.3" cy="25.0" r="1.0" fill="#e6eedc"/><circle cx="-7.7" cy="29.6" r="1.0" fill="#e6eedc"/><circle cx="-9.9" cy="33.4" r="1.0" fill="#e6eedc"/><circle cx="-9.9" cy="42.6" r="1.0" fill="#e6eedc"/><circle cx="-7.7" cy="46.4" r="1.0" fill="#e6eedc"/><circle cx="0.3" cy="51.0" r="1.0" fill="#e6eedc"/><circle cx="4.7" cy="51.0" r="1.0" fill="#e6eedc"/><circle cx="12.6" cy="46.4" r="1.0" fill="#e6eedc"/><circle cx="14.8" cy="42.6" r="1.0" fill="#e6eedc"/><circle cx="37.4" cy="46.4" r="1.0" fill="#e6eedc"/><circle cx="35.2" cy="42.6" r="1.0" fill="#e6eedc"/><circle cx="27.2" cy="38.0" r="1.0" fill="#e6eedc"/><circle cx="22.8" cy="38.0" r="1.0" fill="#e6eedc"/><circle cx="14.8" cy="42.6" r="1.0" fill="#e6eedc"/><circle cx="12.6" cy="46.4" r="1.0" fill="#e6eedc"/><circle cx="12.6" cy="55.6" r="1.0" fill="#e6eedc"/><circle cx="14.8" cy="59.4" r="1.0" fill="#e6eedc"/><circle cx="22.8" cy="64.0" r="1.0" fill="#e6eedc"/><circle cx="27.2" cy="64.0" r="1.0" fill="#e6eedc"/><circle cx="35.2" cy="59.4" r="1.0" fill="#e6eedc"/><circle cx="37.4" cy="55.6" r="1.0" fill="#e6eedc"/><circle cx="59.9" cy="33.4" r="1.0" fill="#e6eedc"/><circle cx="57.7" cy="29.6" r="1.0" fill="#e6eedc"/><circle cx="49.7" cy="25.0" r="1.0" fill="#e6eedc"/><circle cx="45.3" cy="25.0" r="1.0" fill="#e6eedc"/><circle cx="37.4" cy="29.6" r="1.0" fill="#e6eedc"/><circle cx="35.2" cy="33.4" r="1.0" fill="#e6eedc"/><circle cx="35.2" cy="42.6" r="1.0" fill="#e6eedc"/><circle cx="37.4" cy="46.4" r="1.0" fill="#e6eedc"/><circle cx="45.3" cy="51.0" r="1.0" fill="#e6eedc"/><circle cx="49.7" cy="51.0" r="1.0" fill="#e6eedc"/><circle cx="57.7" cy="46.4" r="1.0" fill="#e6eedc"/><circle cx="59.9" cy="42.6" r="1.0" fill="#e6eedc"/></svg></div><div class="th" style="left:406px"><svg width="50" height="50" viewBox="0 0 50 50"><rect width="50" height="50" fill="#1c0c9c"/><polygon points="63.45,2.80 58.77,2.80 61.11,6.85" fill="#c818a8"/><polygon points="51.07,-4.35 48.73,-0.30 53.41,-0.30" fill="#c818a8"/><polygon points="38.68,2.80 41.02,6.85 43.36,2.80" fill="#c818a8"/><polygon points="38.68,17.10 43.36,17.10 41.02,13.05" fill="#c818a8"/><polygon points="51.07,24.25 53.41,20.20 48.73,20.20" fill="#c818a8"/><polygon points="63.45,17.10 61.11,13.05 58.77,17.10" fill="#c818a8"/><polygon points="59.03,5.35 53.87,5.10 51.07,0.75 48.27,5.10 43.10,5.35 45.47,9.95 43.10,14.55 48.27,14.80 51.07,19.15 53.87,14.80 59.03,14.55 56.67,9.95" fill="#9a2c3c"/><polygon points="55.07,9.95 58.97,12.20 58.97,7.70" fill="#1f8a6a"/><polygon points="53.07,6.49 56.97,4.23 53.07,1.98" fill="#1f8a6a"/><polygon points="49.07,6.49 49.07,1.98 45.17,4.23" fill="#1f8a6a"/><polygon points="47.07,9.95 43.17,7.70 43.17,12.20" fill="#1f8a6a"/><polygon points="49.07,13.41 45.17,15.67 49.07,17.92" fill="#1f8a6a"/><polygon points="53.07,13.41 53.07,17.92 56.97,15.67" fill="#1f8a6a"/><polygon points="37.38,-12.25 32.71,-12.25 35.05,-8.20" fill="#c818a8"/><polygon points="25.00,-19.40 22.66,-15.35 27.34,-15.35" fill="#c818a8"/><polygon points="12.62,-12.25 14.95,-8.20 17.29,-12.25" fill="#c818a8"/><polygon points="12.62,2.05 17.29,2.05 14.95,-2.00" fill="#c818a8"/><polygon points="25.00,9.20 27.34,5.15 22.66,5.15" fill="#c818a8"/><polygon points="37.38,2.05 35.05,-2.00 32.71,2.05" fill="#c818a8"/><polygon points="32.97,-9.70 27.80,-9.95 25.00,-14.30 22.20,-9.95 17.03,-9.70 19.40,-5.10 17.03,-0.50 22.20,-0.25 25.00,4.10 27.80,-0.25 32.97,-0.50 30.60,-5.10" fill="#9a2c3c"/><polygon points="29.00,-5.10 32.90,-2.85 32.90,-7.35" fill="#1f8a6a"/><polygon points="27.00,-8.56 30.90,-10.82 27.00,-13.07" fill="#1f8a6a"/><polygon points="23.00,-8.56 23.00,-13.07 19.10,-10.82" fill="#1f8a6a"/><polygon points="21.00,-5.10 17.10,-7.35 17.10,-2.85" fill="#1f8a6a"/><polygon points="23.00,-1.64 19.10,0.62 23.00,2.87" fill="#1f8a6a"/><polygon points="27.00,-1.64 27.00,2.87 30.90,0.62" fill="#1f8a6a"/><polygon points="11.32,2.80 6.64,2.80 8.98,6.85" fill="#c818a8"/><polygon points="-1.07,-4.35 -3.41,-0.30 1.27,-0.30" fill="#c818a8"/><polygon points="-13.45,2.80 -11.11,6.85 -8.77,2.80" fill="#c818a8"/><polygon points="-13.45,17.10 -8.77,17.10 -11.11,13.05" fill="#c818a8"/><polygon points="-1.07,24.25 1.27,20.20 -3.41,20.20" fill="#c818a8"/><polygon points="11.32,17.10 8.98,13.05 6.64,17.10" fill="#c818a8"/><polygon points="6.90,5.35 1.73,5.10 -1.07,0.75 -3.87,5.10 -9.03,5.35 -6.67,9.95 -9.03,14.55 -3.87,14.80 -1.07,19.15 1.73,14.80 6.90,14.55 4.53,9.95" fill="#9a2c3c"/><polygon points="2.93,9.95 6.83,12.20 6.83,7.70" fill="#1f8a6a"/><polygon points="0.93,6.49 4.83,4.23 0.93,1.98" fill="#1f8a6a"/><polygon points="-3.07,6.49 -3.07,1.98 -6.97,4.23" fill="#1f8a6a"/><polygon points="-5.07,9.95 -8.97,7.70 -8.97,12.20" fill="#1f8a6a"/><polygon points="-3.07,13.41 -6.97,15.67 -3.07,17.92" fill="#1f8a6a"/><polygon points="0.93,13.41 0.93,17.92 4.83,15.67" fill="#1f8a6a"/><polygon points="11.32,32.90 6.64,32.90 8.98,36.95" fill="#c818a8"/><polygon points="-1.07,25.75 -3.41,29.80 1.27,29.80" fill="#c818a8"/><polygon points="-13.45,32.90 -11.11,36.95 -8.77,32.90" fill="#c818a8"/><polygon points="-13.45,47.20 -8.77,47.20 -11.11,43.15" fill="#c818a8"/><polygon points="-1.07,54.35 1.27,50.30 -3.41,50.30" fill="#c818a8"/><polygon points="11.32,47.20 8.98,43.15 6.64,47.20" fill="#c818a8"/><polygon points="6.90,35.45 1.73,35.20 -1.07,30.85 -3.87,35.20 -9.03,35.45 -6.67,40.05 -9.03,44.65 -3.87,44.90 -1.07,49.25 1.73,44.90 6.90,44.65 4.53,40.05" fill="#9a2c3c"/><polygon points="2.93,40.05 6.83,42.30 6.83,37.80" fill="#1f8a6a"/><polygon points="0.93,36.59 4.83,34.33 0.93,32.08" fill="#1f8a6a"/><polygon points="-3.07,36.59 -3.07,32.08 -6.97,34.33" fill="#1f8a6a"/><polygon points="-5.07,40.05 -8.97,37.80 -8.97,42.30" fill="#1f8a6a"/><polygon points="-3.07,43.51 -6.97,45.77 -3.07,48.02" fill="#1f8a6a"/><polygon points="0.93,43.51 0.93,48.02 4.83,45.77" fill="#1f8a6a"/><polygon points="37.38,47.95 32.71,47.95 35.05,52.00" fill="#c818a8"/><polygon points="25.00,40.80 22.66,44.85 27.34,44.85" fill="#c818a8"/><polygon points="12.62,47.95 14.95,52.00 17.29,47.95" fill="#c818a8"/><polygon points="12.62,62.25 17.29,62.25 14.95,58.20" fill="#c818a8"/><polygon points="25.00,69.40 27.34,65.35 22.66,65.35" fill="#c818a8"/><polygon points="37.38,62.25 35.05,58.20 32.71,62.25" fill="#c818a8"/><polygon points="32.97,50.50 27.80,50.25 25.00,45.90 22.20,50.25 17.03,50.50 19.40,55.10 17.03,59.70 22.20,59.95 25.00,64.30 27.80,59.95 32.97,59.70 30.60,55.10" fill="#9a2c3c"/><polygon points="29.00,55.10 32.90,57.35 32.90,52.85" fill="#1f8a6a"/><polygon points="27.00,51.64 30.90,49.38 27.00,47.13" fill="#1f8a6a"/><polygon points="23.00,51.64 23.00,47.13 19.10,49.38" fill="#1f8a6a"/><polygon points="21.00,55.10 17.10,52.85 17.10,57.35" fill="#1f8a6a"/><polygon points="23.00,58.56 19.10,60.82 23.00,63.07" fill="#1f8a6a"/><polygon points="27.00,58.56 27.00,63.07 30.90,60.82" fill="#1f8a6a"/><polygon points="63.45,32.90 58.77,32.90 61.11,36.95" fill="#c818a8"/><polygon points="51.07,25.75 48.73,29.80 53.41,29.80" fill="#c818a8"/><polygon points="38.68,32.90 41.02,36.95 43.36,32.90" fill="#c818a8"/><polygon points="38.68,47.20 43.36,47.20 41.02,43.15" fill="#c818a8"/><polygon points="51.07,54.35 53.41,50.30 48.73,50.30" fill="#c818a8"/><polygon points="63.45,47.20 61.11,43.15 58.77,47.20" fill="#c818a8"/><polygon points="59.03,35.45 53.87,35.20 51.07,30.85 48.27,35.20 43.10,35.45 45.47,40.05 43.10,44.65 48.27,44.90 51.07,49.25 53.87,44.90 59.03,44.65 56.67,40.05" fill="#9a2c3c"/><polygon points="55.07,40.05 58.97,42.30 58.97,37.80" fill="#1f8a6a"/><polygon points="53.07,36.59 56.97,34.33 53.07,32.08" fill="#1f8a6a"/><polygon points="49.07,36.59 49.07,32.08 45.17,34.33" fill="#1f8a6a"/><polygon points="47.07,40.05 43.17,37.80 43.17,42.30" fill="#1f8a6a"/><polygon points="49.07,43.51 45.17,45.77 49.07,48.02" fill="#1f8a6a"/><polygon points="53.07,43.51 53.07,48.02 56.97,45.77" fill="#1f8a6a"/><polygon points="37.38,17.85 32.71,17.85 35.05,21.90" fill="#c818a8"/><polygon points="25.00,10.70 22.66,14.75 27.34,14.75" fill="#c818a8"/><polygon points="12.62,17.85 14.95,21.90 17.29,17.85" fill="#c818a8"/><polygon points="12.62,32.15 17.29,32.15 14.95,28.10" fill="#c818a8"/><polygon points="25.00,39.30 27.34,35.25 22.66,35.25" fill="#c818a8"/><polygon points="37.38,32.15 35.05,28.10 32.71,32.15" fill="#c818a8"/><polygon points="32.97,20.40 27.80,20.15 25.00,15.80 22.20,20.15 17.03,20.40 19.40,25.00 17.03,29.60 22.20,29.85 25.00,34.20 27.80,29.85 32.97,29.60 30.60,25.00" fill="#9a2c3c"/><polygon points="29.00,25.00 32.90,27.25 32.90,22.75" fill="#1f8a6a"/><polygon points="27.00,21.54 30.90,19.28 27.00,17.03" fill="#1f8a6a"/><polygon points="23.00,21.54 23.00,17.03 19.10,19.28" fill="#1f8a6a"/><polygon points="21.00,25.00 17.10,22.75 17.10,27.25" fill="#1f8a6a"/><polygon points="23.00,28.46 19.10,30.72 23.00,32.97" fill="#1f8a6a"/><polygon points="27.00,28.46 27.00,32.97 30.90,30.72" fill="#1f8a6a"/><polygon points="34.40,25.00 46.40,31.93 46.40,18.07" fill="#ff5a12" stroke="#ff5a12" stroke-width="2.4" stroke-linejoin="round"/><circle cx="42.4" cy="25.0" r="7" fill="#ff5a12"/><polygon points="34.40,25.00 41.30,26.91 46.40,31.93 44.60,25.00 46.40,18.07 41.30,23.09" fill="#c9b86a"/><polygon points="29.70,16.86 41.70,9.93 29.70,3.00" fill="#ff5a12" stroke="#ff5a12" stroke-width="2.4" stroke-linejoin="round"/><circle cx="33.7" cy="9.9" r="7" fill="#ff5a12"/><polygon points="29.70,16.86 34.80,11.84 41.70,9.93 34.80,8.03 29.70,3.00 31.50,9.93" fill="#c9b86a"/><polygon points="20.30,16.86 20.30,3.00 8.30,9.93" fill="#ff5a12" stroke="#ff5a12" stroke-width="2.4" stroke-linejoin="round"/><circle cx="16.3" cy="9.9" r="7" fill="#ff5a12"/><polygon points="20.30,16.86 18.50,9.93 20.30,3.00 15.20,8.03 8.30,9.93 15.20,11.84" fill="#c9b86a"/><polygon points="15.60,25.00 3.60,18.07 3.60,31.93" fill="#ff5a12" stroke="#ff5a12" stroke-width="2.4" stroke-linejoin="round"/><circle cx="7.6" cy="25.0" r="7" fill="#ff5a12"/><polygon points="15.60,25.00 8.70,23.09 3.60,18.07 5.40,25.00 3.60,31.93 8.70,26.91" fill="#c9b86a"/><polygon points="20.30,33.14 8.30,40.07 20.30,47.00" fill="#ff5a12" stroke="#ff5a12" stroke-width="2.4" stroke-linejoin="round"/><circle cx="16.3" cy="40.1" r="7" fill="#ff5a12"/><polygon points="20.30,33.14 15.20,38.16 8.30,40.07 15.20,41.97 20.30,47.00 18.50,40.07" fill="#c9b86a"/><polygon points="29.70,33.14 29.70,47.00 41.70,40.07" fill="#ff5a12" stroke="#ff5a12" stroke-width="2.4" stroke-linejoin="round"/><circle cx="33.7" cy="40.1" r="7" fill="#ff5a12"/><polygon points="29.70,33.14 31.50,40.07 29.70,47.00 34.80,41.97 41.70,40.07 34.80,38.16" fill="#c9b86a"/><polygon points="60.47,9.95 72.47,16.88 72.47,3.02" fill="#ff5a12" stroke="#ff5a12" stroke-width="2.4" stroke-linejoin="round"/><circle cx="68.5" cy="10.0" r="7" fill="#ff5a12"/><polygon points="60.47,9.95 67.37,11.86 72.47,16.88 70.67,9.95 72.47,3.02 67.37,8.04" fill="#c9b86a"/><polygon points="55.77,1.81 67.77,-5.12 55.77,-12.05" fill="#ff5a12" stroke="#ff5a12" stroke-width="2.4" stroke-linejoin="round"/><circle cx="59.8" cy="-5.1" r="7" fill="#ff5a12"/><polygon points="55.77,1.81 60.87,-3.21 67.77,-5.12 60.87,-7.02 55.77,-12.05 57.57,-5.12" fill="#c9b86a"/><polygon points="46.37,1.81 46.37,-12.05 34.37,-5.12" fill="#ff5a12" stroke="#ff5a12" stroke-width="2.4" stroke-linejoin="round"/><circle cx="42.4" cy="-5.1" r="7" fill="#ff5a12"/><polygon points="46.37,1.81 44.57,-5.12 46.37,-12.05 41.27,-7.02 34.37,-5.12 41.27,-3.21" fill="#c9b86a"/><polygon points="55.77,18.09 55.77,31.95 67.77,25.02" fill="#ff5a12" stroke="#ff5a12" stroke-width="2.4" stroke-linejoin="round"/><circle cx="59.8" cy="25.0" r="7" fill="#ff5a12"/><polygon points="55.77,18.09 57.57,25.02 55.77,31.95 60.87,26.92 67.77,25.02 60.87,23.11" fill="#c9b86a"/><polygon points="29.70,-13.24 41.70,-20.17 29.70,-27.10" fill="#ff5a12" stroke="#ff5a12" stroke-width="2.4" stroke-linejoin="round"/><circle cx="33.7" cy="-20.2" r="7" fill="#ff5a12"/><polygon points="29.70,-13.24 34.80,-18.26 41.70,-20.17 34.80,-22.07 29.70,-27.10 31.50,-20.17" fill="#c9b86a"/><polygon points="20.30,-13.24 20.30,-27.10 8.30,-20.17" fill="#ff5a12" stroke="#ff5a12" stroke-width="2.4" stroke-linejoin="round"/><circle cx="16.3" cy="-20.2" r="7" fill="#ff5a12"/><polygon points="20.30,-13.24 18.50,-20.17 20.30,-27.10 15.20,-22.07 8.30,-20.17 15.20,-18.26" fill="#c9b86a"/><polygon points="15.60,-5.10 3.60,-12.03 3.60,1.83" fill="#ff5a12" stroke="#ff5a12" stroke-width="2.4" stroke-linejoin="round"/><circle cx="7.6" cy="-5.1" r="7" fill="#ff5a12"/><polygon points="15.60,-5.10 8.70,-7.01 3.60,-12.03 5.40,-5.10 3.60,1.83 8.70,-3.19" fill="#c9b86a"/><polygon points="-5.77,1.81 -5.77,-12.05 -17.77,-5.12" fill="#ff5a12" stroke="#ff5a12" stroke-width="2.4" stroke-linejoin="round"/><circle cx="-9.8" cy="-5.1" r="7" fill="#ff5a12"/><polygon points="-5.77,1.81 -7.57,-5.12 -5.77,-12.05 -10.87,-7.02 -17.77,-5.12 -10.87,-3.21" fill="#c9b86a"/><polygon points="-10.47,9.95 -22.47,3.02 -22.47,16.88" fill="#ff5a12" stroke="#ff5a12" stroke-width="2.4" stroke-linejoin="round"/><circle cx="-18.5" cy="9.9" r="7" fill="#ff5a12"/><polygon points="-10.47,9.95 -17.37,8.04 -22.47,3.02 -20.67,9.95 -22.47,16.88 -17.37,11.86" fill="#c9b86a"/><polygon points="-5.77,18.09 -17.77,25.02 -5.77,31.95" fill="#ff5a12" stroke="#ff5a12" stroke-width="2.4" stroke-linejoin="round"/><circle cx="-9.8" cy="25.0" r="7" fill="#ff5a12"/><polygon points="-5.77,18.09 -10.87,23.11 -17.77,25.02 -10.87,26.92 -5.77,31.95 -7.57,25.02" fill="#c9b86a"/><polygon points="-10.47,40.05 -22.47,33.12 -22.47,46.98" fill="#ff5a12" stroke="#ff5a12" stroke-width="2.4" stroke-linejoin="round"/><circle cx="-18.5" cy="40.1" r="7" fill="#ff5a12"/><polygon points="-10.47,40.05 -17.37,38.14 -22.47,33.12 -20.67,40.05 -22.47,46.98 -17.37,41.96" fill="#c9b86a"/><polygon points="-5.77,48.19 -17.77,55.12 -5.77,62.05" fill="#ff5a12" stroke="#ff5a12" stroke-width="2.4" stroke-linejoin="round"/><circle cx="-9.8" cy="55.1" r="7" fill="#ff5a12"/><polygon points="-5.77,48.19 -10.87,53.21 -17.77,55.12 -10.87,57.02 -5.77,62.05 -7.57,55.12" fill="#c9b86a"/><polygon points="3.63,48.19 3.63,62.05 15.63,55.12" fill="#ff5a12" stroke="#ff5a12" stroke-width="2.4" stroke-linejoin="round"/><circle cx="7.6" cy="55.1" r="7" fill="#ff5a12"/><polygon points="3.63,48.19 5.43,55.12 3.63,62.05 8.73,57.02 15.63,55.12 8.73,53.21" fill="#c9b86a"/><polygon points="34.40,55.10 46.40,62.03 46.40,48.17" fill="#ff5a12" stroke="#ff5a12" stroke-width="2.4" stroke-linejoin="round"/><circle cx="42.4" cy="55.1" r="7" fill="#ff5a12"/><polygon points="34.40,55.10 41.30,57.01 46.40,62.03 44.60,55.10 46.40,48.17 41.30,53.19" fill="#c9b86a"/><polygon points="20.30,63.24 8.30,70.17 20.30,77.10" fill="#ff5a12" stroke="#ff5a12" stroke-width="2.4" stroke-linejoin="round"/><circle cx="16.3" cy="70.2" r="7" fill="#ff5a12"/><polygon points="20.30,63.24 15.20,68.26 8.30,70.17 15.20,72.07 20.30,77.10 18.50,70.17" fill="#c9b86a"/><polygon points="29.70,63.24 29.70,77.10 41.70,70.17" fill="#ff5a12" stroke="#ff5a12" stroke-width="2.4" stroke-linejoin="round"/><circle cx="33.7" cy="70.2" r="7" fill="#ff5a12"/><polygon points="29.70,63.24 31.50,70.17 29.70,77.10 34.80,72.07 41.70,70.17 34.80,68.26" fill="#c9b86a"/><polygon points="60.47,40.05 72.47,46.98 72.47,33.12" fill="#ff5a12" stroke="#ff5a12" stroke-width="2.4" stroke-linejoin="round"/><circle cx="68.5" cy="40.1" r="7" fill="#ff5a12"/><polygon points="60.47,40.05 67.37,41.96 72.47,46.98 70.67,40.05 72.47,33.12 67.37,38.14" fill="#c9b86a"/><polygon points="55.77,48.19 55.77,62.05 67.77,55.12" fill="#ff5a12" stroke="#ff5a12" stroke-width="2.4" stroke-linejoin="round"/><circle cx="59.8" cy="55.1" r="7" fill="#ff5a12"/><polygon points="55.77,48.19 57.57,55.12 55.77,62.05 60.87,57.02 67.77,55.12 60.87,53.21" fill="#c9b86a"/></svg></div>
<div class="abs" id="lang">English<i></i></div>
<div class="abs" id="main"></div><div class="abs" id="leftb"></div>
<div class="abs" id="panel"></div>
<div class="tab" id="t1">Edit</div><div class="tab" id="t2">Actual Size</div><div class="tab" id="t3">Help</div>
<div class="abs" id="sf"><svg width="44.3" height="30" viewBox="0 0 44.3 30"><defs><linearGradient id="sky" x1="0" y1="0" x2=".6" y2="1"><stop offset="0" stop-color="#3455a8"/><stop offset="1" stop-color="#6b8dd0"/></linearGradient>
<radialGradient id="sfg" cx=".45" cy=".35" r=".7"><stop offset="0" stop-color="#fbc63a"/><stop offset=".6" stop-color="#f3ab1c"/><stop offset="1" stop-color="#e08a10"/></radialGradient></defs>
<rect width="44.3" height="30" fill="url(#sky)"/>
<path d="M18 21 L19 30" stroke="#2a3214" stroke-width="1.4"/><path d="M21 3 L21.3 7" stroke="#2a3250" stroke-width=".8"/>
<path d="M2.8 13 Q3 5 14 4 Q25 3.5 27.5 11 Q28 16 24 18 L23 22 L20 19.5 L18 22.5 L15 20 L11 21.5 L9 18.5 L5 18 Z" fill="url(#sfg)"/>
<g fill="none" stroke="#fff" stroke-opacity=".8" stroke-linecap="round"><path d="M25 8 Q33 7 36 12 Q37.5 16 35 19" stroke-width="1.1" stroke-dasharray="1.6 1.2"/><path d="M26 13 Q31 15 27 21 Q24 25 25 29" stroke-width="1.2" stroke-dasharray="1.8 1"/><path d="M36 23 L39 28" stroke-width="1.1" stroke-dasharray="1.2 1"/><path d="M13 23 Q11 26 10.5 30" stroke-width="1" stroke-dasharray="1.4 1"/><path d="M29 17 Q34 18 33 22" stroke-width=".9" stroke-dasharray="1 1.2"/></g>
<g fill="#fff" fill-opacity=".75"><circle cx="22" cy="10" r=".8"/><circle cx="24.5" cy="13.5" r=".9"/><circle cx="8" cy="14" r=".6"/></g>
<path d="M0 30 V.5 H44.3" fill="none" stroke="#1d3390" stroke-width="1"/>
</svg></div>
<svg class="abs" id="redx" viewBox="0 0 6 6"><path d="M1 1L5 5M5 1L1 5" stroke="#e04a4a" stroke-width="1.7" stroke-linecap="square"/></svg>
<div class="lbl" style="top:104px">File:</div><div class="lbl" style="top:118px">Url:</div>
<div class="abs" id="fin"></div><div class="abs" id="browse">Browse...</div><div class="abs" id="uin"></div>
<div class="btn" id="upload">Upload</div>
<svg class="abs" id="arr" width="22" height="22" viewBox="0 0 22 22"><path d="M0 0H22V22H9.5V12.5H0Z" fill="#d6d6d6"/><path d="M9 13 L15 7" stroke="#fff" stroke-width="2.4"/><path d="M10.5 5.5H16.5V11.5Z" fill="#fff"/></svg>
<div class="abs" id="tb"></div>
<div class="abs" id="title">Kaleidoscope Pattern</div>
<div class="abs" id="crumb">Kaleidoscope &gt; Kaleidoscope Pattern</div>
<div class="abs" style="left:164px;top:136px"><svg id="icons" width="130" height="15" viewBox="164 136 130 15">
<line x1="165.5" y1="138.5" x2="165.5" y2="148.5" stroke="#a2a2a2" stroke-width=".8"/><line x1="166.5" y1="138.5" x2="166.5" y2="148.5" stroke="#f0f0f0" stroke-width=".8"/>
<g stroke="#111" stroke-width="1.1" fill="none"><path d="M172 139.5 V145.5 H177.5"/><path d="M170 141.5 H175.7 V147.3"/></g>
<path d="M183.6 140.6 L181 145.6 H183.6Z M184.8 140.6 L187.4 145.6 H184.8Z" fill="#c4dcf5" stroke="#7aa8e0" stroke-width=".6"/>
<path d="M197.6 140.2 L192.8 143 L197.6 143Z M197.6 144 L192.8 144 L197.6 146.8Z" fill="#c4dcf5" stroke="#7aa8e0" stroke-width=".6"/>
<rect x="205.5" y="143.3" width="5.2" height="3.8" fill="#8fb5ea" stroke="#5a86d0" stroke-width=".5"/><rect x="202.6" y="139" width="5.2" height="6.2" rx="1" fill="#2a62c8"/>
<rect x="213.2" y="143.3" width="5.2" height="3.8" fill="#8fb5ea" stroke="#5a86d0" stroke-width=".5"/><rect x="216" y="139" width="5.2" height="6.2" rx="1" fill="#2a62c8"/>
<line x1="226.5" y1="138.5" x2="226.5" y2="148.5" stroke="#a2a2a2" stroke-width=".8"/><line x1="227.5" y1="138.5" x2="227.5" y2="148.5" stroke="#f0f0f0" stroke-width=".8"/>
<rect x="232" y="139.6" width="2.6" height="7" fill="#f3cc55" stroke="#d0a030" stroke-width=".5"/><rect x="234.8" y="139.6" width="2.6" height="7" fill="#f9e59a" stroke="#d0a030" stroke-width=".5"/>
<rect x="242" y="139.7" width="7" height="7" fill="#1a1a1a"/><rect x="243.2" y="140.3" width="4.6" height="3.3" fill="#f4f4f4"/><rect x="243.7" y="144.5" width="3.6" height="2.2" fill="#8a8a8a"/><rect x="244.2" y="144.9" width="1.1" height="1.5" fill="#222"/>
<circle cx="256.6" cy="143.4" r="3.5" fill="#3a8fe0"/><circle cx="256.6" cy="143.6" r="1.5" fill="#d8ecff"/><path d="M255 140 L259 139 L258 142Z" fill="#dff"/>
<rect x="265.7" y="140.4" width="6.9" height="6.4" fill="#fff" stroke="#222" stroke-width=".7"/><rect x="268.8" y="143" width="1.4" height="1.4" fill="#222"/><rect x="271" y="139.6" width="2" height="2" fill="#222"/><rect x="266.6" y="145" width="1.2" height="1.2" fill="#222"/>
<line x1="279.5" y1="138.5" x2="279.5" y2="148.5" stroke="#a2a2a2" stroke-width=".8"/><line x1="280.5" y1="138.5" x2="280.5" y2="148.5" stroke="#f0f0f0" stroke-width=".8"/>
<circle cx="287.5" cy="143.5" r="3.2" fill="#fff" stroke="#cc2020" stroke-width="1.05"/><line x1="285.3" y1="141.3" x2="289.7" y2="145.7" stroke="#cc2020" stroke-width="1.05"/>
</svg></div>
<div class="abs" id="side"></div>
<div class="btn" id="refresh">Refresh</div><div class="btn" id="apply">Apply</div>
<div class="sl" style="top:174px">Opacity</div><div class="sl" style="top:186.8px">Shift (%)</div><div class="sl" style="top:199.7px">Count</div>
<div class="sel" style="top:174px">100<i></i></div><div class="sel" style="top:186.4px">60<i></i></div><div class="sel" style="top:199.4px">2<i></i></div>
<div class="cb" style="top:225.3px"></div><div class="cl" style="top:225.4px">Flip</div>
<div class="cb" style="top:238.4px"></div><div class="cl" style="top:238.2px">Double</div>
<div class="abs" style="left:77px;top:156px;width:288px;height:244px;overflow:hidden"><svg id="kal" width="288" height="244" viewBox="77 156 288 244">
<defs>
<radialGradient id="gOuter" cx="0" cy="0" r="52" gradientUnits="userSpaceOnUse">
<stop offset="0" stop-color="#f2a616"/><stop offset=".68" stop-color="#f6ae1e"/><stop offset=".76" stop-color="#f9bd3a"/><stop offset="1" stop-color="#f9c44e"/></radialGradient>
<radialGradient id="gMid" cx="0" cy="0" r="36" gradientUnits="userSpaceOnUse">
<stop offset="0" stop-color="#f1a616"/><stop offset=".8" stop-color="#f5b01e"/><stop offset="1" stop-color="#f6b82e"/></radialGradient>
<radialGradient id="gVoid" cx=".5" cy=".5" r=".5">
<stop offset="0" stop-color="#364b92" stop-opacity=".8"/><stop offset="1" stop-color="#364b92" stop-opacity="0"/></radialGradient>
<filter id="spk" x="-56" y="-56" width="112" height="112" filterUnits="userSpaceOnUse" color-interpolation-filters="sRGB">
<feTurbulence type="fractalNoise" baseFrequency="0.33" numOctaves="2" seed="7" result="n"/>
<feColorMatrix in="n" type="matrix" values="0 0 0 0 1  0 0 0 0 .96  0 0 0 0 .82  0 0 0 4 -1.9" result="k"/>
<feComposite in="k" in2="SourceAlpha" operator="in"/>
</filter>
<filter id="drk" x="-56" y="-56" width="112" height="112" filterUnits="userSpaceOnUse" color-interpolation-filters="sRGB">
<feTurbulence type="fractalNoise" baseFrequency="0.3" numOctaves="2" seed="21" result="n"/>
<feColorMatrix in="n" type="matrix" values="0 0 0 0 .88  0 0 0 0 .52  0 0 0 0 .04  0 0 0 3.2 -1.55" result="k"/>
<feComposite in="k" in2="SourceAlpha" operator="in"/>
</filter>
<g id="fl" transform="scale(1.04 1.035)"><g fill="url(#gOuter)"><polygon points="50.20,0.00 47.91,-12.84 42.78,-24.70 35.07,-35.07 25.10,-43.47 12.84,-47.91 0.00,-49.40 -12.84,-47.91 -25.10,-43.47 -35.07,-35.07 -42.78,-24.70 -47.91,-12.84 -50.20,-0.00 -47.91,12.84 -42.78,24.70 -35.07,35.07 -25.10,43.47 -12.84,47.91 -0.00,49.40 12.84,47.91 25.10,43.47 35.07,35.07 42.78,24.70 47.91,12.84"/><circle cx="46.99" cy="-6.19" r="3.6"/><circle cx="43.79" cy="-18.14" r="3.6"/><circle cx="37.60" cy="-28.86" r="3.6"/><circle cx="28.86" cy="-37.60" r="3.6"/><circle cx="18.14" cy="-43.79" r="3.6"/><circle cx="6.19" cy="-46.99" r="3.6"/><circle cx="-6.19" cy="-46.99" r="3.6"/><circle cx="-18.14" cy="-43.79" r="3.6"/><circle cx="-28.86" cy="-37.60" r="3.6"/><circle cx="-37.60" cy="-28.86" r="3.6"/><circle cx="-43.79" cy="-18.14" r="3.6"/><circle cx="-46.99" cy="-6.19" r="3.6"/><circle cx="-46.99" cy="6.19" r="3.6"/><circle cx="-43.79" cy="18.14" r="3.6"/><circle cx="-37.60" cy="28.86" r="3.6"/><circle cx="-28.86" cy="37.60" r="3.6"/><circle cx="-18.14" cy="43.79" r="3.6"/><circle cx="-6.19" cy="46.99" r="3.6"/><circle cx="6.19" cy="46.99" r="3.6"/><circle cx="18.14" cy="43.79" r="3.6"/><circle cx="28.86" cy="37.60" r="3.6"/><circle cx="37.60" cy="28.86" r="3.6"/><circle cx="43.79" cy="18.14" r="3.6"/><circle cx="46.99" cy="6.19" r="3.6"/></g>
<g transform="rotate(0)">
<circle cx="44.0" cy="0.0" r="3.4" fill="#fdebb8" fill-opacity=".5"/>
<circle cx="42.5" cy="-6.5" r="2.8" fill="#fdebb8" fill-opacity=".5"/>
<circle cx="42.5" cy="6.5" r="2.8" fill="#fdebb8" fill-opacity=".5"/>
<circle cx="46.5" cy="-10.5" r="2.2" fill="#fdebb8" fill-opacity=".5"/>
<circle cx="46.5" cy="10.5" r="2.2" fill="#fdebb8" fill-opacity=".5"/>
<circle cx="38.5" cy="0.0" r="2.2" fill="#fdebb8" fill-opacity=".5"/>
<ellipse cx="48.6" cy="0" rx="3.2" ry="6.5" fill="#f9dc8c" fill-opacity=".55" stroke="#fff" stroke-opacity=".8" stroke-width=".8"/>
<ellipse cx="46.8" cy="-9" rx="2.6" ry="4" fill="none" stroke="#fff" stroke-opacity=".55" stroke-width=".7" transform="rotate(-10 46.8 -9)"/>
<ellipse cx="46.8" cy="9" rx="2.6" ry="4" fill="none" stroke="#fff" stroke-opacity=".55" stroke-width=".7" transform="rotate(10 46.8 9)"/>
</g>
<g transform="rotate(-60)">
<circle cx="44.0" cy="0.0" r="3.4" fill="#fdebb8" fill-opacity=".5"/>
<circle cx="42.5" cy="-6.5" r="2.8" fill="#fdebb8" fill-opacity=".5"/>
<circle cx="42.5" cy="6.5" r="2.8" fill="#fdebb8" fill-opacity=".5"/>
<circle cx="46.5" cy="-10.5" r="2.2" fill="#fdebb8" fill-opacity=".5"/>
<circle cx="46.5" cy="10.5" r="2.2" fill="#fdebb8" fill-opacity=".5"/>
<circle cx="38.5" cy="0.0" r="2.2" fill="#fdebb8" fill-opacity=".5"/>
<ellipse cx="48.6" cy="0" rx="3.2" ry="6.5" fill="#f9dc8c" fill-opacity=".55" stroke="#fff" stroke-opacity=".8" stroke-width=".8"/>
<ellipse cx="46.8" cy="-9" rx="2.6" ry="4" fill="none" stroke="#fff" stroke-opacity=".55" stroke-width=".7" transform="rotate(-10 46.8 -9)"/>
<ellipse cx="46.8" cy="9" rx="2.6" ry="4" fill="none" stroke="#fff" stroke-opacity=".55" stroke-width=".7" transform="rotate(10 46.8 9)"/>
</g>
<g transform="rotate(-120)">
<circle cx="44.0" cy="0.0" r="3.4" fill="#fdebb8" fill-opacity=".5"/>
<circle cx="42.5" cy="-6.5" r="2.8" fill="#fdebb8" fill-opacity=".5"/>
<circle cx="42.5" cy="6.5" r="2.8" fill="#fdebb8" fill-opacity=".5"/>
<circle cx="46.5" cy="-10.5" r="2.2" fill="#fdebb8" fill-opacity=".5"/>
<circle cx="46.5" cy="10.5" r="2.2" fill="#fdebb8" fill-opacity=".5"/>
<circle cx="38.5" cy="0.0" r="2.2" fill="#fdebb8" fill-opacity=".5"/>
<ellipse cx="48.6" cy="0" rx="3.2" ry="6.5" fill="#f9dc8c" fill-opacity=".55" stroke="#fff" stroke-opacity=".8" stroke-width=".8"/>
<ellipse cx="46.8" cy="-9" rx="2.6" ry="4" fill="none" stroke="#fff" stroke-opacity=".55" stroke-width=".7" transform="rotate(-10 46.8 -9)"/>
<ellipse cx="46.8" cy="9" rx="2.6" ry="4" fill="none" stroke="#fff" stroke-opacity=".55" stroke-width=".7" transform="rotate(10 46.8 9)"/>
</g>
<g transform="rotate(-180)">
<circle cx="44.0" cy="0.0" r="3.4" fill="#fdebb8" fill-opacity=".5"/>
<circle cx="42.5" cy="-6.5" r="2.8" fill="#fdebb8" fill-opacity=".5"/>
<circle cx="42.5" cy="6.5" r="2.8" fill="#fdebb8" fill-opacity=".5"/>
<circle cx="46.5" cy="-10.5" r="2.2" fill="#fdebb8" fill-opacity=".5"/>
<circle cx="46.5" cy="10.5" r="2.2" fill="#fdebb8" fill-opacity=".5"/>
<circle cx="38.5" cy="0.0" r="2.2" fill="#fdebb8" fill-opacity=".5"/>
<ellipse cx="48.6" cy="0" rx="3.2" ry="6.5" fill="#f9dc8c" fill-opacity=".55" stroke="#fff" stroke-opacity=".8" stroke-width=".8"/>
<ellipse cx="46.8" cy="-9" rx="2.6" ry="4" fill="none" stroke="#fff" stroke-opacity=".55" stroke-width=".7" transform="rotate(-10 46.8 -9)"/>
<ellipse cx="46.8" cy="9" rx="2.6" ry="4" fill="none" stroke="#fff" stroke-opacity=".55" stroke-width=".7" transform="rotate(10 46.8 9)"/>
</g>
<g transform="rotate(-240)">
<circle cx="44.0" cy="0.0" r="3.4" fill="#fdebb8" fill-opacity=".5"/>
<circle cx="42.5" cy="-6.5" r="2.8" fill="#fdebb8" fill-opacity=".5"/>
<circle cx="42.5" cy="6.5" r="2.8" fill="#fdebb8" fill-opacity=".5"/>
<circle cx="46.5" cy="-10.5" r="2.2" fill="#fdebb8" fill-opacity=".5"/>
<circle cx="46.5" cy="10.5" r="2.2" fill="#fdebb8" fill-opacity=".5"/>
<circle cx="38.5" cy="0.0" r="2.2" fill="#fdebb8" fill-opacity=".5"/>
<ellipse cx="48.6" cy="0" rx="3.2" ry="6.5" fill="#f9dc8c" fill-opacity=".55" stroke="#fff" stroke-opacity=".8" stroke-width=".8"/>
<ellipse cx="46.8" cy="-9" rx="2.6" ry="4" fill="none" stroke="#fff" stroke-opacity=".55" stroke-width=".7" transform="rotate(-10 46.8 -9)"/>
<ellipse cx="46.8" cy="9" rx="2.6" ry="4" fill="none" stroke="#fff" stroke-opacity=".55" stroke-width=".7" transform="rotate(10 46.8 9)"/>
</g>
<g transform="rotate(-300)">
<circle cx="44.0" cy="0.0" r="3.4" fill="#fdebb8" fill-opacity=".5"/>
<circle cx="42.5" cy="-6.5" r="2.8" fill="#fdebb8" fill-opacity=".5"/>
<circle cx="42.5" cy="6.5" r="2.8" fill="#fdebb8" fill-opacity=".5"/>
<circle cx="46.5" cy="-10.5" r="2.2" fill="#fdebb8" fill-opacity=".5"/>
<circle cx="46.5" cy="10.5" r="2.2" fill="#fdebb8" fill-opacity=".5"/>
<circle cx="38.5" cy="0.0" r="2.2" fill="#fdebb8" fill-opacity=".5"/>
<ellipse cx="48.6" cy="0" rx="3.2" ry="6.5" fill="#f9dc8c" fill-opacity=".55" stroke="#fff" stroke-opacity=".8" stroke-width=".8"/>
<ellipse cx="46.8" cy="-9" rx="2.6" ry="4" fill="none" stroke="#fff" stroke-opacity=".55" stroke-width=".7" transform="rotate(-10 46.8 -9)"/>
<ellipse cx="46.8" cy="9" rx="2.6" ry="4" fill="none" stroke="#fff" stroke-opacity=".55" stroke-width=".7" transform="rotate(10 46.8 9)"/>
</g>
<circle cx="39.60" cy="-10.61" r="3.6" fill="#fde9a8" fill-opacity=".55"/>
<circle cx="40.57" cy="-10.87" r="1.6" fill="#fff" fill-opacity=".55"/>
<circle cx="28.99" cy="-28.99" r="3.6" fill="#fde9a8" fill-opacity=".55"/>
<circle cx="29.70" cy="-29.70" r="1.6" fill="#fff" fill-opacity=".55"/>
<circle cx="10.61" cy="-39.60" r="3.6" fill="#fde9a8" fill-opacity=".55"/>
<circle cx="10.87" cy="-40.57" r="1.6" fill="#fff" fill-opacity=".55"/>
<circle cx="-10.61" cy="-39.60" r="3.6" fill="#fde9a8" fill-opacity=".55"/>
<circle cx="-10.87" cy="-40.57" r="1.6" fill="#fff" fill-opacity=".55"/>
<circle cx="-28.99" cy="-28.99" r="3.6" fill="#fde9a8" fill-opacity=".55"/>
<circle cx="-29.70" cy="-29.70" r="1.6" fill="#fff" fill-opacity=".55"/>
<circle cx="-39.60" cy="-10.61" r="3.6" fill="#fde9a8" fill-opacity=".55"/>
<circle cx="-40.57" cy="-10.87" r="1.6" fill="#fff" fill-opacity=".55"/>
<circle cx="-39.60" cy="10.61" r="3.6" fill="#fde9a8" fill-opacity=".55"/>
<circle cx="-40.57" cy="10.87" r="1.6" fill="#fff" fill-opacity=".55"/>
<circle cx="-28.99" cy="28.99" r="3.6" fill="#fde9a8" fill-opacity=".55"/>
<circle cx="-29.70" cy="29.70" r="1.6" fill="#fff" fill-opacity=".55"/>
<circle cx="-10.61" cy="39.60" r="3.6" fill="#fde9a8" fill-opacity=".55"/>
<circle cx="-10.87" cy="40.57" r="1.6" fill="#fff" fill-opacity=".55"/>
<circle cx="10.61" cy="39.60" r="3.6" fill="#fde9a8" fill-opacity=".55"/>
<circle cx="10.87" cy="40.57" r="1.6" fill="#fff" fill-opacity=".55"/>
<circle cx="28.99" cy="28.99" r="3.6" fill="#fde9a8" fill-opacity=".55"/>
<circle cx="29.70" cy="29.70" r="1.6" fill="#fff" fill-opacity=".55"/>
<circle cx="39.60" cy="10.61" r="3.6" fill="#fde9a8" fill-opacity=".55"/>
<circle cx="40.57" cy="10.87" r="1.6" fill="#fff" fill-opacity=".55"/>
<path fill-rule="evenodd" d="M-51 0A51 51 0 1 0 51 0A51 51 0 1 0 -51 0ZM-36 0A36 36 0 1 0 36 0A36 36 0 1 0 -36 0Z" fill="#fff" filter="url(#drk)" opacity=".55"/>
<path fill-rule="evenodd" d="M-51 0A51 51 0 1 0 51 0A51 51 0 1 0 -51 0ZM-37 0A37 37 0 1 0 37 0A37 37 0 1 0 -37 0Z" fill="#fff" filter="url(#spk)" opacity=".6"/>
<polygon points="36.00,0.00 33.32,-8.93 31.18,-18.00 24.40,-24.40 18.00,-31.18 8.93,-33.32 0.00,-36.00 -8.93,-33.32 -18.00,-31.18 -24.40,-24.40 -31.18,-18.00 -33.32,-8.93 -36.00,-0.00 -33.32,8.93 -31.18,18.00 -24.40,24.40 -18.00,31.18 -8.93,33.32 -0.00,36.00 8.93,33.32 18.00,31.18 24.40,24.40 31.18,18.00 33.32,8.93" fill="url(#gMid)"/>
<g transform="rotate(-30)">
<ellipse cx="27.5" cy="-8.2" rx="6.8" ry="3.2" fill="#f8bf30" stroke="#df8f0e" stroke-width=".5" transform="rotate(30 27.5 -8.2)"/>
<ellipse cx="27.5" cy="8.2" rx="6.8" ry="3.2" fill="#f8bf30" stroke="#df8f0e" stroke-width=".5" transform="rotate(-30 27.5 8.2)"/>
</g>
<g transform="rotate(-90)">
<ellipse cx="27.5" cy="-8.2" rx="6.8" ry="3.2" fill="#f8bf30" stroke="#df8f0e" stroke-width=".5" transform="rotate(30 27.5 -8.2)"/>
<ellipse cx="27.5" cy="8.2" rx="6.8" ry="3.2" fill="#f8bf30" stroke="#df8f0e" stroke-width=".5" transform="rotate(-30 27.5 8.2)"/>
</g>
<g transform="rotate(-150)">
<ellipse cx="27.5" cy="-8.2" rx="6.8" ry="3.2" fill="#f8bf30" stroke="#df8f0e" stroke-width=".5" transform="rotate(30 27.5 -8.2)"/>
<ellipse cx="27.5" cy="8.2" rx="6.8" ry="3.2" fill="#f8bf30" stroke="#df8f0e" stroke-width=".5" transform="rotate(-30 27.5 8.2)"/>
</g>
<g transform="rotate(-210)">
<ellipse cx="27.5" cy="-8.2" rx="6.8" ry="3.2" fill="#f8bf30" stroke="#df8f0e" stroke-width=".5" transform="rotate(30 27.5 -8.2)"/>
<ellipse cx="27.5" cy="8.2" rx="6.8" ry="3.2" fill="#f8bf30" stroke="#df8f0e" stroke-width=".5" transform="rotate(-30 27.5 8.2)"/>
</g>
<g transform="rotate(-270)">
<ellipse cx="27.5" cy="-8.2" rx="6.8" ry="3.2" fill="#f8bf30" stroke="#df8f0e" stroke-width=".5" transform="rotate(30 27.5 -8.2)"/>
<ellipse cx="27.5" cy="8.2" rx="6.8" ry="3.2" fill="#f8bf30" stroke="#df8f0e" stroke-width=".5" transform="rotate(-30 27.5 8.2)"/>
</g>
<g transform="rotate(-330)">
<ellipse cx="27.5" cy="-8.2" rx="6.8" ry="3.2" fill="#f8bf30" stroke="#df8f0e" stroke-width=".5" transform="rotate(30 27.5 -8.2)"/>
<ellipse cx="27.5" cy="8.2" rx="6.8" ry="3.2" fill="#f8bf30" stroke="#df8f0e" stroke-width=".5" transform="rotate(-30 27.5 8.2)"/>
</g>
<polygon points="30.20,0.00 24.16,-4.04 19.55,-6.16 16.44,-7.32 14.72,-8.50 14.56,-10.58 15.11,-13.85 15.58,-18.90 13.60,-23.56 8.58,-22.95 4.44,-20.01 1.88,-17.90 0.00,-17.00 -1.88,-17.90 -4.44,-20.01 -8.58,-22.95 -13.60,-23.56 -15.58,-18.90 -15.11,-13.85 -14.56,-10.58 -14.72,-8.50 -16.44,-7.32 -19.55,-6.16 -24.16,-4.04 -30.20,-0.00 -24.16,4.04 -19.55,6.16 -16.44,7.32 -14.72,8.50 -14.56,10.58 -15.11,13.85 -15.58,18.90 -13.60,23.56 -8.58,22.95 -4.44,20.01 -1.88,17.90 -0.00,17.00 1.88,17.90 4.44,20.01 8.58,22.95 13.60,23.56 15.58,18.90 15.11,13.85 14.56,10.58 14.72,8.50 16.44,7.32 19.55,6.16 24.16,4.04" fill="#5383cb"/>
<polygon points="11.00,0.00 17.32,-10.00 5.50,-9.53 0.00,-20.00 -5.50,-9.53 -17.32,-10.00 -11.00,-0.00 -17.32,10.00 -5.50,9.53 -0.00,20.00 5.50,9.53 17.32,10.00" fill="#34351c"/>
<polygon points="7.60,0.00 13.51,-7.80 3.80,-6.58 0.00,-15.60 -3.80,-6.58 -13.51,-7.80 -7.60,-0.00 -13.51,7.80 -3.80,6.58 -0.00,15.60 3.80,6.58 13.51,7.80" fill="#5383cb"/>
<g transform="rotate(-30)">
<path d="M20 -6 L36 -9 L36 9 L20 6 Z" fill="#f0a61a"/>
<ellipse cx="25.40" cy="-3.35" rx="9.8" ry="3.95" fill="#fccf3a" stroke="#e0930f" stroke-width=".5" transform="rotate(-5 25.40 -3.35)"/>
<ellipse cx="25.40" cy="3.35" rx="9.8" ry="3.95" fill="#fac532" stroke="#e0930f" stroke-width=".5" transform="rotate(5 25.40 3.35)"/>
</g>
<g transform="rotate(-90)">
<path d="M20 -6 L36 -9 L36 9 L20 6 Z" fill="#f0a61a"/>
<ellipse cx="25.40" cy="-3.35" rx="9.8" ry="3.95" fill="#fccf3a" stroke="#e0930f" stroke-width=".5" transform="rotate(-5 25.40 -3.35)"/>
<ellipse cx="25.40" cy="3.35" rx="9.8" ry="3.95" fill="#fac532" stroke="#e0930f" stroke-width=".5" transform="rotate(5 25.40 3.35)"/>
</g>
<g transform="rotate(-150)">
<path d="M20 -6 L36 -9 L36 9 L20 6 Z" fill="#f0a61a"/>
<ellipse cx="25.40" cy="-3.35" rx="9.8" ry="3.95" fill="#fccf3a" stroke="#e0930f" stroke-width=".5" transform="rotate(-5 25.40 -3.35)"/>
<ellipse cx="25.40" cy="3.35" rx="9.8" ry="3.95" fill="#fac532" stroke="#e0930f" stroke-width=".5" transform="rotate(5 25.40 3.35)"/>
</g>
<g transform="rotate(-210)">
<path d="M20 -6 L36 -9 L36 9 L20 6 Z" fill="#f0a61a"/>
<ellipse cx="25.40" cy="-3.35" rx="9.8" ry="3.95" fill="#fccf3a" stroke="#e0930f" stroke-width=".5" transform="rotate(-5 25.40 -3.35)"/>
<ellipse cx="25.40" cy="3.35" rx="9.8" ry="3.95" fill="#fac532" stroke="#e0930f" stroke-width=".5" transform="rotate(5 25.40 3.35)"/>
</g>
<g transform="rotate(-270)">
<path d="M20 -6 L36 -9 L36 9 L20 6 Z" fill="#f0a61a"/>
<ellipse cx="25.40" cy="-3.35" rx="9.8" ry="3.95" fill="#fccf3a" stroke="#e0930f" stroke-width=".5" transform="rotate(-5 25.40 -3.35)"/>
<ellipse cx="25.40" cy="3.35" rx="9.8" ry="3.95" fill="#fac532" stroke="#e0930f" stroke-width=".5" transform="rotate(5 25.40 3.35)"/>
</g>
<g transform="rotate(-330)">
<path d="M20 -6 L36 -9 L36 9 L20 6 Z" fill="#f0a61a"/>
<ellipse cx="25.40" cy="-3.35" rx="9.8" ry="3.95" fill="#fccf3a" stroke="#e0930f" stroke-width=".5" transform="rotate(-5 25.40 -3.35)"/>
<ellipse cx="25.40" cy="3.35" rx="9.8" ry="3.95" fill="#fac532" stroke="#e0930f" stroke-width=".5" transform="rotate(5 25.40 3.35)"/>
</g></g>
</defs>
<rect x="77" y="156" width="288" height="244" fill="#4963aa"/>
<circle cx="149.8" cy="280.5" r="30" fill="url(#gVoid)"/>
<line x1="149.8" y1="280.5" x2="113.8" y2="280.5" stroke="#364b92" stroke-opacity=".45" stroke-width="3"/>
<line x1="149.8" y1="280.5" x2="167.9" y2="249.2" stroke="#364b92" stroke-opacity=".45" stroke-width="3"/>
<line x1="149.8" y1="280.5" x2="167.9" y2="311.8" stroke="#364b92" stroke-opacity=".45" stroke-width="3"/>
<circle cx="77.7" cy="280.5" r="30" fill="url(#gVoid)"/>
<line x1="77.7" y1="280.5" x2="113.8" y2="280.5" stroke="#364b92" stroke-opacity=".45" stroke-width="3"/>
<line x1="77.7" y1="280.5" x2="59.6" y2="249.2" stroke="#364b92" stroke-opacity=".45" stroke-width="3"/>
<line x1="77.7" y1="280.5" x2="59.6" y2="311.8" stroke="#364b92" stroke-opacity=".45" stroke-width="3"/>
<circle cx="149.8" cy="155.5" r="30" fill="url(#gVoid)"/>
<line x1="149.8" y1="155.5" x2="113.8" y2="155.5" stroke="#364b92" stroke-opacity=".45" stroke-width="3"/>
<line x1="149.8" y1="155.5" x2="167.9" y2="186.8" stroke="#364b92" stroke-opacity=".45" stroke-width="3"/>
<line x1="149.8" y1="155.5" x2="167.9" y2="124.2" stroke="#364b92" stroke-opacity=".45" stroke-width="3"/>
<circle cx="77.7" cy="155.5" r="30" fill="url(#gVoid)"/>
<line x1="77.7" y1="155.5" x2="113.8" y2="155.5" stroke="#364b92" stroke-opacity=".45" stroke-width="3"/>
<line x1="77.7" y1="155.5" x2="59.6" y2="186.8" stroke="#364b92" stroke-opacity=".45" stroke-width="3"/>
<line x1="77.7" y1="155.5" x2="59.6" y2="124.2" stroke="#364b92" stroke-opacity=".45" stroke-width="3"/>
<circle cx="185.9" cy="218.0" r="30" fill="url(#gVoid)"/>
<line x1="185.9" y1="218.0" x2="167.9" y2="186.8" stroke="#364b92" stroke-opacity=".45" stroke-width="3"/>
<line x1="185.9" y1="218.0" x2="167.9" y2="249.2" stroke="#364b92" stroke-opacity=".45" stroke-width="3"/>
<line x1="185.9" y1="218.0" x2="222.0" y2="218.0" stroke="#364b92" stroke-opacity=".45" stroke-width="3"/>
<circle cx="41.6" cy="218.0" r="30" fill="url(#gVoid)"/>
<line x1="41.6" y1="218.0" x2="59.6" y2="186.8" stroke="#364b92" stroke-opacity=".45" stroke-width="3"/>
<line x1="41.6" y1="218.0" x2="59.6" y2="249.2" stroke="#364b92" stroke-opacity=".45" stroke-width="3"/>
<line x1="41.6" y1="218.0" x2="5.5" y2="218.0" stroke="#364b92" stroke-opacity=".45" stroke-width="3"/>
<circle cx="185.9" cy="343.0" r="30" fill="url(#gVoid)"/>
<line x1="185.9" y1="343.0" x2="167.9" y2="311.8" stroke="#364b92" stroke-opacity=".45" stroke-width="3"/>
<line x1="185.9" y1="343.0" x2="167.9" y2="374.2" stroke="#364b92" stroke-opacity=".45" stroke-width="3"/>
<line x1="185.9" y1="343.0" x2="222.0" y2="343.0" stroke="#364b92" stroke-opacity=".45" stroke-width="3"/>
<circle cx="41.6" cy="343.0" r="30" fill="url(#gVoid)"/>
<line x1="41.6" y1="343.0" x2="59.6" y2="311.8" stroke="#364b92" stroke-opacity=".45" stroke-width="3"/>
<line x1="41.6" y1="343.0" x2="59.6" y2="374.2" stroke="#364b92" stroke-opacity=".45" stroke-width="3"/>
<line x1="41.6" y1="343.0" x2="5.5" y2="343.0" stroke="#364b92" stroke-opacity=".45" stroke-width="3"/>
<circle cx="258.1" cy="218.0" r="30" fill="url(#gVoid)"/>
<line x1="258.1" y1="218.0" x2="222.0" y2="218.0" stroke="#364b92" stroke-opacity=".45" stroke-width="3"/>
<line x1="258.1" y1="218.0" x2="276.1" y2="186.8" stroke="#364b92" stroke-opacity=".45" stroke-width="3"/>
<line x1="258.1" y1="218.0" x2="276.1" y2="249.2" stroke="#364b92" stroke-opacity=".45" stroke-width="3"/>
<circle cx="294.2" cy="155.5" r="30" fill="url(#gVoid)"/>
<line x1="294.2" y1="155.5" x2="276.1" y2="186.8" stroke="#364b92" stroke-opacity=".45" stroke-width="3"/>
<line x1="294.2" y1="155.5" x2="276.1" y2="124.2" stroke="#364b92" stroke-opacity=".45" stroke-width="3"/>
<line x1="294.2" y1="155.5" x2="330.2" y2="155.5" stroke="#364b92" stroke-opacity=".45" stroke-width="3"/>
<circle cx="258.1" cy="343.0" r="30" fill="url(#gVoid)"/>
<line x1="258.1" y1="343.0" x2="222.0" y2="343.0" stroke="#364b92" stroke-opacity=".45" stroke-width="3"/>
<line x1="258.1" y1="343.0" x2="276.1" y2="311.8" stroke="#364b92" stroke-opacity=".45" stroke-width="3"/>
<line x1="258.1" y1="343.0" x2="276.1" y2="374.2" stroke="#364b92" stroke-opacity=".45" stroke-width="3"/>
<circle cx="294.2" cy="280.5" r="30" fill="url(#gVoid)"/>
<line x1="294.2" y1="280.5" x2="276.1" y2="249.2" stroke="#364b92" stroke-opacity=".45" stroke-width="3"/>
<line x1="294.2" y1="280.5" x2="276.1" y2="311.8" stroke="#364b92" stroke-opacity=".45" stroke-width="3"/>
<line x1="294.2" y1="280.5" x2="330.2" y2="280.5" stroke="#364b92" stroke-opacity=".45" stroke-width="3"/>
<circle cx="366.3" cy="280.5" r="30" fill="url(#gVoid)"/>
<line x1="366.3" y1="280.5" x2="330.2" y2="280.5" stroke="#364b92" stroke-opacity=".45" stroke-width="3"/>
<line x1="366.3" y1="280.5" x2="384.4" y2="249.2" stroke="#364b92" stroke-opacity=".45" stroke-width="3"/>
<line x1="366.3" y1="280.5" x2="384.4" y2="311.8" stroke="#364b92" stroke-opacity=".45" stroke-width="3"/>
<circle cx="366.3" cy="155.5" r="30" fill="url(#gVoid)"/>
<line x1="366.3" y1="155.5" x2="330.2" y2="155.5" stroke="#364b92" stroke-opacity=".45" stroke-width="3"/>
<line x1="366.3" y1="155.5" x2="384.4" y2="186.8" stroke="#364b92" stroke-opacity=".45" stroke-width="3"/>
<line x1="366.3" y1="155.5" x2="384.4" y2="124.2" stroke="#364b92" stroke-opacity=".45" stroke-width="3"/>
<circle cx="402.4" cy="218.0" r="30" fill="url(#gVoid)"/>
<line x1="402.4" y1="218.0" x2="384.4" y2="186.8" stroke="#364b92" stroke-opacity=".45" stroke-width="3"/>
<line x1="402.4" y1="218.0" x2="384.4" y2="249.2" stroke="#364b92" stroke-opacity=".45" stroke-width="3"/>
<line x1="402.4" y1="218.0" x2="438.5" y2="218.0" stroke="#364b92" stroke-opacity=".45" stroke-width="3"/>
<circle cx="402.4" cy="343.0" r="30" fill="url(#gVoid)"/>
<line x1="402.4" y1="343.0" x2="384.4" y2="311.8" stroke="#364b92" stroke-opacity=".45" stroke-width="3"/>
<line x1="402.4" y1="343.0" x2="384.4" y2="374.2" stroke="#364b92" stroke-opacity=".45" stroke-width="3"/>
<line x1="402.4" y1="343.0" x2="438.5" y2="343.0" stroke="#364b92" stroke-opacity=".45" stroke-width="3"/>
<polyline points="125.25,268.00 124.50,270.08 123.95,272.17 123.75,274.25 123.95,276.33 124.50,278.42 125.25,280.50 126.00,282.58 126.55,284.67 126.75,286.75 126.55,288.83 126.00,290.92 125.25,293.00" fill="none" stroke="#1c1e30" stroke-width="1.05" stroke-opacity=".85"/>
<polyline points="125.25,268.00 126.00,270.08 126.55,272.17 126.75,274.25 126.55,276.33 126.00,278.42 125.25,280.50 124.50,282.58 123.95,284.67 123.75,286.75 123.95,288.83 124.50,290.92 125.25,293.00" fill="none" stroke="#1c1e30" stroke-width="1.05" stroke-opacity=".85"/>
<polyline points="102.25,268.00 101.50,270.08 100.95,272.17 100.75,274.25 100.95,276.33 101.50,278.42 102.25,280.50 103.00,282.58 103.55,284.67 103.75,286.75 103.55,288.83 103.00,290.92 102.25,293.00" fill="none" stroke="#1c1e30" stroke-width="1.05" stroke-opacity=".85"/>
<polyline points="102.25,268.00 103.00,270.08 103.55,272.17 103.75,274.25 103.55,276.33 103.00,278.42 102.25,280.50 101.50,282.58 100.95,284.67 100.75,286.75 100.95,288.83 101.50,290.92 102.25,293.00" fill="none" stroke="#1c1e30" stroke-width="1.05" stroke-opacity=".85"/>
<polyline points="102.25,168.00 103.00,165.92 103.55,163.83 103.75,161.75 103.55,159.67 103.00,157.58 102.25,155.50 101.50,153.42 100.95,151.33 100.75,149.25 100.95,147.17 101.50,145.08 102.25,143.00" fill="none" stroke="#1c1e30" stroke-width="1.05" stroke-opacity=".85"/>
<polyline points="102.25,168.00 101.50,165.92 100.95,163.83 100.75,161.75 100.95,159.67 101.50,157.58 102.25,155.50 103.00,153.42 103.55,151.33 103.75,149.25 103.55,147.17 103.00,145.08 102.25,143.00" fill="none" stroke="#1c1e30" stroke-width="1.05" stroke-opacity=".85"/>
<polyline points="125.25,168.00 126.00,165.92 126.55,163.83 126.75,161.75 126.55,159.67 126.00,157.58 125.25,155.50 124.50,153.42 123.95,151.33 123.75,149.25 123.95,147.17 124.50,145.08 125.25,143.00" fill="none" stroke="#1c1e30" stroke-width="1.05" stroke-opacity=".85"/>
<polyline points="125.25,168.00 124.50,165.92 123.95,163.83 123.75,161.75 123.95,159.67 124.50,157.58 125.25,155.50 126.00,153.42 126.55,151.33 126.75,149.25 126.55,147.17 126.00,145.08 125.25,143.00" fill="none" stroke="#1c1e30" stroke-width="1.05" stroke-opacity=".85"/>
<polyline points="151.30,183.04 153.48,182.65 155.56,182.08 157.46,181.21 159.17,180.00 160.70,178.48 162.12,176.79 163.55,175.10 165.08,173.58 166.79,172.37 168.69,171.50 170.77,170.93 172.95,170.54" fill="none" stroke="#1c1e30" stroke-width="1.05" stroke-opacity=".85"/>
<polyline points="151.30,183.04 152.73,181.35 154.26,179.83 155.96,178.62 157.87,177.75 159.95,177.18 162.12,176.79 164.30,176.40 166.38,175.83 168.29,174.97 169.99,173.75 171.52,172.23 172.95,170.54" fill="none" stroke="#1c1e30" stroke-width="1.05" stroke-opacity=".85"/>
<polyline points="162.80,202.96 164.98,202.57 167.06,202.00 168.96,201.13 170.67,199.92 172.20,198.40 173.63,196.71 175.05,195.02 176.58,193.50 178.29,192.29 180.19,191.42 182.27,190.85 184.45,190.46" fill="none" stroke="#1c1e30" stroke-width="1.05" stroke-opacity=".85"/>
<polyline points="162.80,202.96 164.23,201.27 165.76,199.75 167.46,198.53 169.37,197.67 171.45,197.10 173.63,196.71 175.80,196.32 177.88,195.75 179.79,194.88 181.49,193.67 183.02,192.15 184.45,190.46" fill="none" stroke="#1c1e30" stroke-width="1.05" stroke-opacity=".85"/>
<polyline points="162.80,233.04 164.23,234.73 165.76,236.25 167.46,237.47 169.37,238.33 171.45,238.90 173.63,239.29 175.80,239.68 177.88,240.25 179.79,241.12 181.49,242.33 183.02,243.85 184.45,245.54" fill="none" stroke="#1c1e30" stroke-width="1.05" stroke-opacity=".85"/>
<polyline points="162.80,233.04 164.98,233.43 167.06,234.00 168.96,234.87 170.67,236.08 172.20,237.60 173.63,239.29 175.05,240.98 176.58,242.50 178.29,243.71 180.19,244.58 182.27,245.15 184.45,245.54" fill="none" stroke="#1c1e30" stroke-width="1.05" stroke-opacity=".85"/>
<polyline points="151.30,252.96 152.73,254.65 154.26,256.17 155.96,257.38 157.87,258.25 159.95,258.82 162.12,259.21 164.30,259.60 166.38,260.17 168.29,261.03 169.99,262.25 171.52,263.77 172.95,265.46" fill="none" stroke="#1c1e30" stroke-width="1.05" stroke-opacity=".85"/>
<polyline points="151.30,252.96 153.48,253.35 155.56,253.92 157.46,254.79 159.17,256.00 160.70,257.52 162.12,259.21 163.55,260.90 165.08,262.42 166.79,263.63 168.69,264.50 170.77,265.07 172.95,265.46" fill="none" stroke="#1c1e30" stroke-width="1.05" stroke-opacity=".85"/>
<polyline points="64.70,202.96 63.27,201.27 61.74,199.75 60.04,198.53 58.13,197.67 56.05,197.10 53.87,196.71 51.70,196.32 49.62,195.75 47.71,194.88 46.01,193.67 44.48,192.15 43.05,190.46" fill="none" stroke="#1c1e30" stroke-width="1.05" stroke-opacity=".85"/>
<polyline points="64.70,202.96 62.52,202.57 60.44,202.00 58.54,201.13 56.83,199.92 55.30,198.40 53.87,196.71 52.45,195.02 50.92,193.50 49.21,192.29 47.31,191.42 45.23,190.85 43.05,190.46" fill="none" stroke="#1c1e30" stroke-width="1.05" stroke-opacity=".85"/>
<polyline points="76.20,183.04 74.77,181.35 73.24,179.83 71.54,178.62 69.63,177.75 67.55,177.18 65.38,176.79 63.20,176.40 61.12,175.83 59.21,174.97 57.51,173.75 55.98,172.23 54.55,170.54" fill="none" stroke="#1c1e30" stroke-width="1.05" stroke-opacity=".85"/>
<polyline points="76.20,183.04 74.02,182.65 71.94,182.08 70.04,181.21 68.33,180.00 66.80,178.48 65.38,176.79 63.95,175.10 62.42,173.58 60.71,172.37 58.81,171.50 56.73,170.93 54.55,170.54" fill="none" stroke="#1c1e30" stroke-width="1.05" stroke-opacity=".85"/>
<polyline points="76.20,252.96 74.02,253.35 71.94,253.92 70.04,254.79 68.33,256.00 66.80,257.52 65.38,259.21 63.95,260.90 62.42,262.42 60.71,263.63 58.81,264.50 56.73,265.07 54.55,265.46" fill="none" stroke="#1c1e30" stroke-width="1.05" stroke-opacity=".85"/>
<polyline points="76.20,252.96 74.77,254.65 73.24,256.17 71.54,257.38 69.63,258.25 67.55,258.82 65.38,259.21 63.20,259.60 61.12,260.17 59.21,261.03 57.51,262.25 55.98,263.77 54.55,265.46" fill="none" stroke="#1c1e30" stroke-width="1.05" stroke-opacity=".85"/>
<polyline points="64.70,233.04 62.52,233.43 60.44,234.00 58.54,234.87 56.83,236.08 55.30,237.60 53.87,239.29 52.45,240.98 50.92,242.50 49.21,243.71 47.31,244.58 45.23,245.15 43.05,245.54" fill="none" stroke="#1c1e30" stroke-width="1.05" stroke-opacity=".85"/>
<polyline points="64.70,233.04 63.27,234.73 61.74,236.25 60.04,237.47 58.13,238.33 56.05,238.90 53.87,239.29 51.70,239.68 49.62,240.25 47.71,241.12 46.01,242.33 44.48,243.85 43.05,245.54" fill="none" stroke="#1c1e30" stroke-width="1.05" stroke-opacity=".85"/>
<polyline points="151.30,308.04 153.48,307.65 155.56,307.08 157.46,306.21 159.17,305.00 160.70,303.48 162.12,301.79 163.55,300.10 165.08,298.58 166.79,297.37 168.69,296.50 170.77,295.93 172.95,295.54" fill="none" stroke="#1c1e30" stroke-width="1.05" stroke-opacity=".85"/>
<polyline points="151.30,308.04 152.73,306.35 154.26,304.83 155.96,303.62 157.87,302.75 159.95,302.18 162.12,301.79 164.30,301.40 166.38,300.83 168.29,299.97 169.99,298.75 171.52,297.23 172.95,295.54" fill="none" stroke="#1c1e30" stroke-width="1.05" stroke-opacity=".85"/>
<polyline points="162.80,327.96 164.98,327.57 167.06,327.00 168.96,326.13 170.67,324.92 172.20,323.40 173.63,321.71 175.05,320.02 176.58,318.50 178.29,317.29 180.19,316.42 182.27,315.85 184.45,315.46" fill="none" stroke="#1c1e30" stroke-width="1.05" stroke-opacity=".85"/>
<polyline points="162.80,327.96 164.23,326.27 165.76,324.75 167.46,323.53 169.37,322.67 171.45,322.10 173.63,321.71 175.80,321.32 177.88,320.75 179.79,319.88 181.49,318.67 183.02,317.15 184.45,315.46" fill="none" stroke="#1c1e30" stroke-width="1.05" stroke-opacity=".85"/>
<polyline points="162.80,358.04 164.23,359.73 165.76,361.25 167.46,362.47 169.37,363.33 171.45,363.90 173.63,364.29 175.80,364.68 177.88,365.25 179.79,366.12 181.49,367.33 183.02,368.85 184.45,370.54" fill="none" stroke="#1c1e30" stroke-width="1.05" stroke-opacity=".85"/>
<polyline points="162.80,358.04 164.98,358.43 167.06,359.00 168.96,359.87 170.67,361.08 172.20,362.60 173.63,364.29 175.05,365.98 176.58,367.50 178.29,368.71 180.19,369.58 182.27,370.15 184.45,370.54" fill="none" stroke="#1c1e30" stroke-width="1.05" stroke-opacity=".85"/>
<polyline points="151.30,377.96 152.73,379.65 154.26,381.17 155.96,382.38 157.87,383.25 159.95,383.82 162.12,384.21 164.30,384.60 166.38,385.17 168.29,386.03 169.99,387.25 171.52,388.77 172.95,390.46" fill="none" stroke="#1c1e30" stroke-width="1.05" stroke-opacity=".85"/>
<polyline points="151.30,377.96 153.48,378.35 155.56,378.92 157.46,379.79 159.17,381.00 160.70,382.52 162.12,384.21 163.55,385.90 165.08,387.42 166.79,388.63 168.69,389.50 170.77,390.07 172.95,390.46" fill="none" stroke="#1c1e30" stroke-width="1.05" stroke-opacity=".85"/>
<polyline points="64.70,327.96 63.27,326.27 61.74,324.75 60.04,323.53 58.13,322.67 56.05,322.10 53.87,321.71 51.70,321.32 49.62,320.75 47.71,319.88 46.01,318.67 44.48,317.15 43.05,315.46" fill="none" stroke="#1c1e30" stroke-width="1.05" stroke-opacity=".85"/>
<polyline points="64.70,327.96 62.52,327.57 60.44,327.00 58.54,326.13 56.83,324.92 55.30,323.40 53.87,321.71 52.45,320.02 50.92,318.50 49.21,317.29 47.31,316.42 45.23,315.85 43.05,315.46" fill="none" stroke="#1c1e30" stroke-width="1.05" stroke-opacity=".85"/>
<polyline points="76.20,308.04 74.77,306.35 73.24,304.83 71.54,303.62 69.63,302.75 67.55,302.18 65.38,301.79 63.20,301.40 61.12,300.83 59.21,299.97 57.51,298.75 55.98,297.23 54.55,295.54" fill="none" stroke="#1c1e30" stroke-width="1.05" stroke-opacity=".85"/>
<polyline points="76.20,308.04 74.02,307.65 71.94,307.08 70.04,306.21 68.33,305.00 66.80,303.48 65.38,301.79 63.95,300.10 62.42,298.58 60.71,297.37 58.81,296.50 56.73,295.93 54.55,295.54" fill="none" stroke="#1c1e30" stroke-width="1.05" stroke-opacity=".85"/>
<polyline points="76.20,377.96 74.02,378.35 71.94,378.92 70.04,379.79 68.33,381.00 66.80,382.52 65.38,384.21 63.95,385.90 62.42,387.42 60.71,388.63 58.81,389.50 56.73,390.07 54.55,390.46" fill="none" stroke="#1c1e30" stroke-width="1.05" stroke-opacity=".85"/>
<polyline points="76.20,377.96 74.77,379.65 73.24,381.17 71.54,382.38 69.63,383.25 67.55,383.82 65.38,384.21 63.20,384.60 61.12,385.17 59.21,386.03 57.51,387.25 55.98,388.77 54.55,390.46" fill="none" stroke="#1c1e30" stroke-width="1.05" stroke-opacity=".85"/>
<polyline points="64.70,358.04 62.52,358.43 60.44,359.00 58.54,359.87 56.83,361.08 55.30,362.60 53.87,364.29 52.45,365.98 50.92,367.50 49.21,368.71 47.31,369.58 45.23,370.15 43.05,370.54" fill="none" stroke="#1c1e30" stroke-width="1.05" stroke-opacity=".85"/>
<polyline points="64.70,358.04 63.27,359.73 61.74,361.25 60.04,362.47 58.13,363.33 56.05,363.90 53.87,364.29 51.70,364.68 49.62,365.25 47.71,366.12 46.01,367.33 44.48,368.85 43.05,370.54" fill="none" stroke="#1c1e30" stroke-width="1.05" stroke-opacity=".85"/>
<polyline points="162.80,108.04 164.23,109.73 165.76,111.25 167.46,112.47 169.37,113.33 171.45,113.90 173.63,114.29 175.80,114.68 177.88,115.25 179.79,116.12 181.49,117.33 183.02,118.85 184.45,120.54" fill="none" stroke="#1c1e30" stroke-width="1.05" stroke-opacity=".85"/>
<polyline points="162.80,108.04 164.98,108.43 167.06,109.00 168.96,109.87 170.67,111.08 172.20,112.60 173.63,114.29 175.05,115.98 176.58,117.50 178.29,118.71 180.19,119.58 182.27,120.15 184.45,120.54" fill="none" stroke="#1c1e30" stroke-width="1.05" stroke-opacity=".85"/>
<polyline points="151.30,127.96 152.73,129.65 154.26,131.17 155.96,132.38 157.87,133.25 159.95,133.82 162.12,134.21 164.30,134.60 166.38,135.17 168.29,136.03 169.99,137.25 171.52,138.77 172.95,140.46" fill="none" stroke="#1c1e30" stroke-width="1.05" stroke-opacity=".85"/>
<polyline points="151.30,127.96 153.48,128.35 155.56,128.92 157.46,129.79 159.17,131.00 160.70,132.52 162.12,134.21 163.55,135.90 165.08,137.42 166.79,138.63 168.69,139.50 170.77,140.07 172.95,140.46" fill="none" stroke="#1c1e30" stroke-width="1.05" stroke-opacity=".85"/>
<polyline points="76.20,127.96 74.02,128.35 71.94,128.92 70.04,129.79 68.33,131.00 66.80,132.52 65.38,134.21 63.95,135.90 62.42,137.42 60.71,138.63 58.81,139.50 56.73,140.07 54.55,140.46" fill="none" stroke="#1c1e30" stroke-width="1.05" stroke-opacity=".85"/>
<polyline points="76.20,127.96 74.77,129.65 73.24,131.17 71.54,132.38 69.63,133.25 67.55,133.82 65.38,134.21 63.20,134.60 61.12,135.17 59.21,136.03 57.51,137.25 55.98,138.77 54.55,140.46" fill="none" stroke="#1c1e30" stroke-width="1.05" stroke-opacity=".85"/>
<polyline points="64.70,108.04 62.52,108.43 60.44,109.00 58.54,109.87 56.83,111.08 55.30,112.60 53.87,114.29 52.45,115.98 50.92,117.50 49.21,118.71 47.31,119.58 45.23,120.15 43.05,120.54" fill="none" stroke="#1c1e30" stroke-width="1.05" stroke-opacity=".85"/>
<polyline points="64.70,108.04 63.27,109.73 61.74,111.25 60.04,112.47 58.13,113.33 56.05,113.90 53.87,114.29 51.70,114.68 49.62,115.25 47.71,116.12 46.01,117.33 44.48,118.85 43.05,120.54" fill="none" stroke="#1c1e30" stroke-width="1.05" stroke-opacity=".85"/>
<polyline points="233.50,205.50 232.75,207.58 232.20,209.67 232.00,211.75 232.20,213.83 232.75,215.92 233.50,218.00 234.25,220.08 234.80,222.17 235.00,224.25 234.80,226.33 234.25,228.42 233.50,230.50" fill="none" stroke="#1c1e30" stroke-width="1.05" stroke-opacity=".85"/>
<polyline points="233.50,205.50 234.25,207.58 234.80,209.67 235.00,211.75 234.80,213.83 234.25,215.92 233.50,218.00 232.75,220.08 232.20,222.17 232.00,224.25 232.20,226.33 232.75,228.42 233.50,230.50" fill="none" stroke="#1c1e30" stroke-width="1.05" stroke-opacity=".85"/>
<polyline points="210.50,205.50 209.75,207.58 209.20,209.67 209.00,211.75 209.20,213.83 209.75,215.92 210.50,218.00 211.25,220.08 211.80,222.17 212.00,224.25 211.80,226.33 211.25,228.42 210.50,230.50" fill="none" stroke="#1c1e30" stroke-width="1.05" stroke-opacity=".85"/>
<polyline points="210.50,205.50 211.25,207.58 211.80,209.67 212.00,211.75 211.80,213.83 211.25,215.92 210.50,218.00 209.75,220.08 209.20,222.17 209.00,224.25 209.20,226.33 209.75,228.42 210.50,230.50" fill="none" stroke="#1c1e30" stroke-width="1.05" stroke-opacity=".85"/>
<polyline points="271.05,170.54 272.48,172.23 274.01,173.75 275.71,174.97 277.62,175.83 279.70,176.40 281.88,176.79 284.05,177.18 286.13,177.75 288.04,178.62 289.74,179.83 291.27,181.35 292.70,183.04" fill="none" stroke="#1c1e30" stroke-width="1.05" stroke-opacity=".85"/>
<polyline points="271.05,170.54 273.23,170.93 275.31,171.50 277.21,172.37 278.92,173.58 280.45,175.10 281.88,176.79 283.30,178.48 284.83,180.00 286.54,181.21 288.44,182.08 290.52,182.65 292.70,183.04" fill="none" stroke="#1c1e30" stroke-width="1.05" stroke-opacity=".85"/>
<polyline points="259.55,190.46 260.98,192.15 262.51,193.67 264.21,194.88 266.12,195.75 268.20,196.32 270.37,196.71 272.55,197.10 274.63,197.67 276.54,198.53 278.24,199.75 279.77,201.27 281.20,202.96" fill="none" stroke="#1c1e30" stroke-width="1.05" stroke-opacity=".85"/>
<polyline points="259.55,190.46 261.73,190.85 263.81,191.42 265.71,192.29 267.42,193.50 268.95,195.02 270.37,196.71 271.80,198.40 273.33,199.92 275.04,201.13 276.94,202.00 279.02,202.57 281.20,202.96" fill="none" stroke="#1c1e30" stroke-width="1.05" stroke-opacity=".85"/>
<polyline points="259.55,120.54 261.73,120.15 263.81,119.58 265.71,118.71 267.42,117.50 268.95,115.98 270.37,114.29 271.80,112.60 273.33,111.08 275.04,109.87 276.94,109.00 279.02,108.43 281.20,108.04" fill="none" stroke="#1c1e30" stroke-width="1.05" stroke-opacity=".85"/>
<polyline points="259.55,120.54 260.98,118.85 262.51,117.33 264.21,116.12 266.12,115.25 268.20,114.68 270.37,114.29 272.55,113.90 274.63,113.33 276.54,112.47 278.24,111.25 279.77,109.73 281.20,108.04" fill="none" stroke="#1c1e30" stroke-width="1.05" stroke-opacity=".85"/>
<polyline points="271.05,140.46 273.23,140.07 275.31,139.50 277.21,138.63 278.92,137.42 280.45,135.90 281.88,134.21 283.30,132.52 284.83,131.00 286.54,129.79 288.44,128.92 290.52,128.35 292.70,127.96" fill="none" stroke="#1c1e30" stroke-width="1.05" stroke-opacity=".85"/>
<polyline points="271.05,140.46 272.48,138.77 274.01,137.25 275.71,136.03 277.62,135.17 279.70,134.60 281.88,134.21 284.05,133.82 286.13,133.25 288.04,132.38 289.74,131.17 291.27,129.65 292.70,127.96" fill="none" stroke="#1c1e30" stroke-width="1.05" stroke-opacity=".85"/>
<polyline points="233.50,330.50 232.75,332.58 232.20,334.67 232.00,336.75 232.20,338.83 232.75,340.92 233.50,343.00 234.25,345.08 234.80,347.17 235.00,349.25 234.80,351.33 234.25,353.42 233.50,355.50" fill="none" stroke="#1c1e30" stroke-width="1.05" stroke-opacity=".85"/>
<polyline points="233.50,330.50 234.25,332.58 234.80,334.67 235.00,336.75 234.80,338.83 234.25,340.92 233.50,343.00 232.75,345.08 232.20,347.17 232.00,349.25 232.20,351.33 232.75,353.42 233.50,355.50" fill="none" stroke="#1c1e30" stroke-width="1.05" stroke-opacity=".85"/>
<polyline points="210.50,330.50 209.75,332.58 209.20,334.67 209.00,336.75 209.20,338.83 209.75,340.92 210.50,343.00 211.25,345.08 211.80,347.17 212.00,349.25 211.80,351.33 211.25,353.42 210.50,355.50" fill="none" stroke="#1c1e30" stroke-width="1.05" stroke-opacity=".85"/>
<polyline points="210.50,330.50 211.25,332.58 211.80,334.67 212.00,336.75 211.80,338.83 211.25,340.92 210.50,343.00 209.75,345.08 209.20,347.17 209.00,349.25 209.20,351.33 209.75,353.42 210.50,355.50" fill="none" stroke="#1c1e30" stroke-width="1.05" stroke-opacity=".85"/>
<polyline points="259.55,245.54 261.73,245.15 263.81,244.58 265.71,243.71 267.42,242.50 268.95,240.98 270.37,239.29 271.80,237.60 273.33,236.08 275.04,234.87 276.94,234.00 279.02,233.43 281.20,233.04" fill="none" stroke="#1c1e30" stroke-width="1.05" stroke-opacity=".85"/>
<polyline points="259.55,245.54 260.98,243.85 262.51,242.33 264.21,241.12 266.12,240.25 268.20,239.68 270.37,239.29 272.55,238.90 274.63,238.33 276.54,237.47 278.24,236.25 279.77,234.73 281.20,233.04" fill="none" stroke="#1c1e30" stroke-width="1.05" stroke-opacity=".85"/>
<polyline points="271.05,265.46 273.23,265.07 275.31,264.50 277.21,263.63 278.92,262.42 280.45,260.90 281.88,259.21 283.30,257.52 284.83,256.00 286.54,254.79 288.44,253.92 290.52,253.35 292.70,252.96" fill="none" stroke="#1c1e30" stroke-width="1.05" stroke-opacity=".85"/>
<polyline points="271.05,265.46 272.48,263.77 274.01,262.25 275.71,261.03 277.62,260.17 279.70,259.60 281.88,259.21 284.05,258.82 286.13,258.25 288.04,257.38 289.74,256.17 291.27,254.65 292.70,252.96" fill="none" stroke="#1c1e30" stroke-width="1.05" stroke-opacity=".85"/>
<polyline points="271.05,295.54 272.48,297.23 274.01,298.75 275.71,299.97 277.62,300.83 279.70,301.40 281.88,301.79 284.05,302.18 286.13,302.75 288.04,303.62 289.74,304.83 291.27,306.35 292.70,308.04" fill="none" stroke="#1c1e30" stroke-width="1.05" stroke-opacity=".85"/>
<polyline points="271.05,295.54 273.23,295.93 275.31,296.50 277.21,297.37 278.92,298.58 280.45,300.10 281.88,301.79 283.30,303.48 284.83,305.00 286.54,306.21 288.44,307.08 290.52,307.65 292.70,308.04" fill="none" stroke="#1c1e30" stroke-width="1.05" stroke-opacity=".85"/>
<polyline points="259.55,315.46 260.98,317.15 262.51,318.67 264.21,319.88 266.12,320.75 268.20,321.32 270.37,321.71 272.55,322.10 274.63,322.67 276.54,323.53 278.24,324.75 279.77,326.27 281.20,327.96" fill="none" stroke="#1c1e30" stroke-width="1.05" stroke-opacity=".85"/>
<polyline points="259.55,315.46 261.73,315.85 263.81,316.42 265.71,317.29 267.42,318.50 268.95,320.02 270.37,321.71 271.80,323.40 273.33,324.92 275.04,326.13 276.94,327.00 279.02,327.57 281.20,327.96" fill="none" stroke="#1c1e30" stroke-width="1.05" stroke-opacity=".85"/>
<polyline points="259.55,370.54 261.73,370.15 263.81,369.58 265.71,368.71 267.42,367.50 268.95,365.98 270.37,364.29 271.80,362.60 273.33,361.08 275.04,359.87 276.94,359.00 279.02,358.43 281.20,358.04" fill="none" stroke="#1c1e30" stroke-width="1.05" stroke-opacity=".85"/>
<polyline points="259.55,370.54 260.98,368.85 262.51,367.33 264.21,366.12 266.12,365.25 268.20,364.68 270.37,364.29 272.55,363.90 274.63,363.33 276.54,362.47 278.24,361.25 279.77,359.73 281.20,358.04" fill="none" stroke="#1c1e30" stroke-width="1.05" stroke-opacity=".85"/>
<polyline points="271.05,390.46 273.23,390.07 275.31,389.50 277.21,388.63 278.92,387.42 280.45,385.90 281.88,384.21 283.30,382.52 284.83,381.00 286.54,379.79 288.44,378.92 290.52,378.35 292.70,377.96" fill="none" stroke="#1c1e30" stroke-width="1.05" stroke-opacity=".85"/>
<polyline points="271.05,390.46 272.48,388.77 274.01,387.25 275.71,386.03 277.62,385.17 279.70,384.60 281.88,384.21 284.05,383.82 286.13,383.25 288.04,382.38 289.74,381.17 291.27,379.65 292.70,377.96" fill="none" stroke="#1c1e30" stroke-width="1.05" stroke-opacity=".85"/>
<polyline points="341.75,268.00 341.00,270.08 340.45,272.17 340.25,274.25 340.45,276.33 341.00,278.42 341.75,280.50 342.50,282.58 343.05,284.67 343.25,286.75 343.05,288.83 342.50,290.92 341.75,293.00" fill="none" stroke="#1c1e30" stroke-width="1.05" stroke-opacity=".85"/>
<polyline points="341.75,268.00 342.50,270.08 343.05,272.17 343.25,274.25 343.05,276.33 342.50,278.42 341.75,280.50 341.00,282.58 340.45,284.67 340.25,286.75 340.45,288.83 341.00,290.92 341.75,293.00" fill="none" stroke="#1c1e30" stroke-width="1.05" stroke-opacity=".85"/>
<polyline points="318.75,268.00 318.00,270.08 317.45,272.17 317.25,274.25 317.45,276.33 318.00,278.42 318.75,280.50 319.50,282.58 320.05,284.67 320.25,286.75 320.05,288.83 319.50,290.92 318.75,293.00" fill="none" stroke="#1c1e30" stroke-width="1.05" stroke-opacity=".85"/>
<polyline points="318.75,268.00 319.50,270.08 320.05,272.17 320.25,274.25 320.05,276.33 319.50,278.42 318.75,280.50 318.00,282.58 317.45,284.67 317.25,286.75 317.45,288.83 318.00,290.92 318.75,293.00" fill="none" stroke="#1c1e30" stroke-width="1.05" stroke-opacity=".85"/>
<polyline points="318.75,168.00 319.50,165.92 320.05,163.83 320.25,161.75 320.05,159.67 319.50,157.58 318.75,155.50 318.00,153.42 317.45,151.33 317.25,149.25 317.45,147.17 318.00,145.08 318.75,143.00" fill="none" stroke="#1c1e30" stroke-width="1.05" stroke-opacity=".85"/>
<polyline points="318.75,168.00 318.00,165.92 317.45,163.83 317.25,161.75 317.45,159.67 318.00,157.58 318.75,155.50 319.50,153.42 320.05,151.33 320.25,149.25 320.05,147.17 319.50,145.08 318.75,143.00" fill="none" stroke="#1c1e30" stroke-width="1.05" stroke-opacity=".85"/>
<polyline points="341.75,168.00 342.50,165.92 343.05,163.83 343.25,161.75 343.05,159.67 342.50,157.58 341.75,155.50 341.00,153.42 340.45,151.33 340.25,149.25 340.45,147.17 341.00,145.08 341.75,143.00" fill="none" stroke="#1c1e30" stroke-width="1.05" stroke-opacity=".85"/>
<polyline points="341.75,168.00 341.00,165.92 340.45,163.83 340.25,161.75 340.45,159.67 341.00,157.58 341.75,155.50 342.50,153.42 343.05,151.33 343.25,149.25 343.05,147.17 342.50,145.08 341.75,143.00" fill="none" stroke="#1c1e30" stroke-width="1.05" stroke-opacity=".85"/>
<polyline points="367.80,183.04 369.98,182.65 372.06,182.08 373.96,181.21 375.67,180.00 377.20,178.48 378.62,176.79 380.05,175.10 381.58,173.58 383.29,172.37 385.19,171.50 387.27,170.93 389.45,170.54" fill="none" stroke="#1c1e30" stroke-width="1.05" stroke-opacity=".85"/>
<polyline points="367.80,183.04 369.23,181.35 370.76,179.83 372.46,178.62 374.37,177.75 376.45,177.18 378.62,176.79 380.80,176.40 382.88,175.83 384.79,174.97 386.49,173.75 388.02,172.23 389.45,170.54" fill="none" stroke="#1c1e30" stroke-width="1.05" stroke-opacity=".85"/>
<polyline points="379.30,202.96 381.48,202.57 383.56,202.00 385.46,201.13 387.17,199.92 388.70,198.40 390.13,196.71 391.55,195.02 393.08,193.50 394.79,192.29 396.69,191.42 398.77,190.85 400.95,190.46" fill="none" stroke="#1c1e30" stroke-width="1.05" stroke-opacity=".85"/>
<polyline points="379.30,202.96 380.73,201.27 382.26,199.75 383.96,198.53 385.87,197.67 387.95,197.10 390.13,196.71 392.30,196.32 394.38,195.75 396.29,194.88 397.99,193.67 399.52,192.15 400.95,190.46" fill="none" stroke="#1c1e30" stroke-width="1.05" stroke-opacity=".85"/>
<polyline points="379.30,233.04 380.73,234.73 382.26,236.25 383.96,237.47 385.87,238.33 387.95,238.90 390.13,239.29 392.30,239.68 394.38,240.25 396.29,241.12 397.99,242.33 399.52,243.85 400.95,245.54" fill="none" stroke="#1c1e30" stroke-width="1.05" stroke-opacity=".85"/>
<polyline points="379.30,233.04 381.48,233.43 383.56,234.00 385.46,234.87 387.17,236.08 388.70,237.60 390.13,239.29 391.55,240.98 393.08,242.50 394.79,243.71 396.69,244.58 398.77,245.15 400.95,245.54" fill="none" stroke="#1c1e30" stroke-width="1.05" stroke-opacity=".85"/>
<polyline points="367.80,252.96 369.23,254.65 370.76,256.17 372.46,257.38 374.37,258.25 376.45,258.82 378.62,259.21 380.80,259.60 382.88,260.17 384.79,261.03 386.49,262.25 388.02,263.77 389.45,265.46" fill="none" stroke="#1c1e30" stroke-width="1.05" stroke-opacity=".85"/>
<polyline points="367.80,252.96 369.98,253.35 372.06,253.92 373.96,254.79 375.67,256.00 377.20,257.52 378.62,259.21 380.05,260.90 381.58,262.42 383.29,263.63 385.19,264.50 387.27,265.07 389.45,265.46" fill="none" stroke="#1c1e30" stroke-width="1.05" stroke-opacity=".85"/>
<polyline points="367.80,308.04 369.98,307.65 372.06,307.08 373.96,306.21 375.67,305.00 377.20,303.48 378.62,301.79 380.05,300.10 381.58,298.58 383.29,297.37 385.19,296.50 387.27,295.93 389.45,295.54" fill="none" stroke="#1c1e30" stroke-width="1.05" stroke-opacity=".85"/>
<polyline points="367.80,308.04 369.23,306.35 370.76,304.83 372.46,303.62 374.37,302.75 376.45,302.18 378.62,301.79 380.80,301.40 382.88,300.83 384.79,299.97 386.49,298.75 388.02,297.23 389.45,295.54" fill="none" stroke="#1c1e30" stroke-width="1.05" stroke-opacity=".85"/>
<polyline points="379.30,327.96 381.48,327.57 383.56,327.00 385.46,326.13 387.17,324.92 388.70,323.40 390.13,321.71 391.55,320.02 393.08,318.50 394.79,317.29 396.69,316.42 398.77,315.85 400.95,315.46" fill="none" stroke="#1c1e30" stroke-width="1.05" stroke-opacity=".85"/>
<polyline points="379.30,327.96 380.73,326.27 382.26,324.75 383.96,323.53 385.87,322.67 387.95,322.10 390.13,321.71 392.30,321.32 394.38,320.75 396.29,319.88 397.99,318.67 399.52,317.15 400.95,315.46" fill="none" stroke="#1c1e30" stroke-width="1.05" stroke-opacity=".85"/>
<polyline points="379.30,358.04 380.73,359.73 382.26,361.25 383.96,362.47 385.87,363.33 387.95,363.90 390.13,364.29 392.30,364.68 394.38,365.25 396.29,366.12 397.99,367.33 399.52,368.85 400.95,370.54" fill="none" stroke="#1c1e30" stroke-width="1.05" stroke-opacity=".85"/>
<polyline points="379.30,358.04 381.48,358.43 383.56,359.00 385.46,359.87 387.17,361.08 388.70,362.60 390.13,364.29 391.55,365.98 393.08,367.50 394.79,368.71 396.69,369.58 398.77,370.15 400.95,370.54" fill="none" stroke="#1c1e30" stroke-width="1.05" stroke-opacity=".85"/>
<polyline points="367.80,377.96 369.23,379.65 370.76,381.17 372.46,382.38 374.37,383.25 376.45,383.82 378.62,384.21 380.80,384.60 382.88,385.17 384.79,386.03 386.49,387.25 388.02,388.77 389.45,390.46" fill="none" stroke="#1c1e30" stroke-width="1.05" stroke-opacity=".85"/>
<polyline points="367.80,377.96 369.98,378.35 372.06,378.92 373.96,379.79 375.67,381.00 377.20,382.52 378.62,384.21 380.05,385.90 381.58,387.42 383.29,388.63 385.19,389.50 387.27,390.07 389.45,390.46" fill="none" stroke="#1c1e30" stroke-width="1.05" stroke-opacity=".85"/>
<polyline points="379.30,108.04 380.73,109.73 382.26,111.25 383.96,112.47 385.87,113.33 387.95,113.90 390.13,114.29 392.30,114.68 394.38,115.25 396.29,116.12 397.99,117.33 399.52,118.85 400.95,120.54" fill="none" stroke="#1c1e30" stroke-width="1.05" stroke-opacity=".85"/>
<polyline points="379.30,108.04 381.48,108.43 383.56,109.00 385.46,109.87 387.17,111.08 388.70,112.60 390.13,114.29 391.55,115.98 393.08,117.50 394.79,118.71 396.69,119.58 398.77,120.15 400.95,120.54" fill="none" stroke="#1c1e30" stroke-width="1.05" stroke-opacity=".85"/>
<polyline points="367.80,127.96 369.23,129.65 370.76,131.17 372.46,132.38 374.37,133.25 376.45,133.82 378.62,134.21 380.80,134.60 382.88,135.17 384.79,136.03 386.49,137.25 388.02,138.77 389.45,140.46" fill="none" stroke="#1c1e30" stroke-width="1.05" stroke-opacity=".85"/>
<polyline points="367.80,127.96 369.98,128.35 372.06,128.92 373.96,129.79 375.67,131.00 377.20,132.52 378.62,134.21 380.05,135.90 381.58,137.42 383.29,138.63 385.19,139.50 387.27,140.07 389.45,140.46" fill="none" stroke="#1c1e30" stroke-width="1.05" stroke-opacity=".85"/>
<polyline points="450.00,205.50 449.25,207.58 448.70,209.67 448.50,211.75 448.70,213.83 449.25,215.92 450.00,218.00 450.75,220.08 451.30,222.17 451.50,224.25 451.30,226.33 450.75,228.42 450.00,230.50" fill="none" stroke="#1c1e30" stroke-width="1.05" stroke-opacity=".85"/>
<polyline points="450.00,205.50 450.75,207.58 451.30,209.67 451.50,211.75 451.30,213.83 450.75,215.92 450.00,218.00 449.25,220.08 448.70,222.17 448.50,224.25 448.70,226.33 449.25,228.42 450.00,230.50" fill="none" stroke="#1c1e30" stroke-width="1.05" stroke-opacity=".85"/>
<polyline points="427.00,205.50 426.25,207.58 425.70,209.67 425.50,211.75 425.70,213.83 426.25,215.92 427.00,218.00 427.75,220.08 428.30,222.17 428.50,224.25 428.30,226.33 427.75,228.42 427.00,230.50" fill="none" stroke="#1c1e30" stroke-width="1.05" stroke-opacity=".85"/>
<polyline points="427.00,205.50 427.75,207.58 428.30,209.67 428.50,211.75 428.30,213.83 427.75,215.92 427.00,218.00 426.25,220.08 425.70,222.17 425.50,224.25 425.70,226.33 426.25,228.42 427.00,230.50" fill="none" stroke="#1c1e30" stroke-width="1.05" stroke-opacity=".85"/>
<polyline points="450.00,330.50 449.25,332.58 448.70,334.67 448.50,336.75 448.70,338.83 449.25,340.92 450.00,343.00 450.75,345.08 451.30,347.17 451.50,349.25 451.30,351.33 450.75,353.42 450.00,355.50" fill="none" stroke="#1c1e30" stroke-width="1.05" stroke-opacity=".85"/>
<polyline points="450.00,330.50 450.75,332.58 451.30,334.67 451.50,336.75 451.30,338.83 450.75,340.92 450.00,343.00 449.25,345.08 448.70,347.17 448.50,349.25 448.70,351.33 449.25,353.42 450.00,355.50" fill="none" stroke="#1c1e30" stroke-width="1.05" stroke-opacity=".85"/>
<polyline points="427.00,330.50 426.25,332.58 425.70,334.67 425.50,336.75 425.70,338.83 426.25,340.92 427.00,343.00 427.75,345.08 428.30,347.17 428.50,349.25 428.30,351.33 427.75,353.42 427.00,355.50" fill="none" stroke="#1c1e30" stroke-width="1.05" stroke-opacity=".85"/>
<polyline points="427.00,330.50 427.75,332.58 428.30,334.67 428.50,336.75 428.30,338.83 427.75,340.92 427.00,343.00 426.25,345.08 425.70,347.17 425.50,349.25 425.70,351.33 426.25,353.42 427.00,355.50" fill="none" stroke="#1c1e30" stroke-width="1.05" stroke-opacity=".85"/>
<polyline points="17.00,205.50 16.25,207.58 15.70,209.67 15.50,211.75 15.70,213.83 16.25,215.92 17.00,218.00 17.75,220.08 18.30,222.17 18.50,224.25 18.30,226.33 17.75,228.42 17.00,230.50" fill="none" stroke="#1c1e30" stroke-width="1.05" stroke-opacity=".85"/>
<polyline points="17.00,205.50 17.75,207.58 18.30,209.67 18.50,211.75 18.30,213.83 17.75,215.92 17.00,218.00 16.25,220.08 15.70,222.17 15.50,224.25 15.70,226.33 16.25,228.42 17.00,230.50" fill="none" stroke="#1c1e30" stroke-width="1.05" stroke-opacity=".85"/>
<polyline points="-6.00,205.50 -6.75,207.58 -7.30,209.67 -7.50,211.75 -7.30,213.83 -6.75,215.92 -6.00,218.00 -5.25,220.08 -4.70,222.17 -4.50,224.25 -4.70,226.33 -5.25,228.42 -6.00,230.50" fill="none" stroke="#1c1e30" stroke-width="1.05" stroke-opacity=".85"/>
<polyline points="-6.00,205.50 -5.25,207.58 -4.70,209.67 -4.50,211.75 -4.70,213.83 -5.25,215.92 -6.00,218.00 -6.75,220.08 -7.30,222.17 -7.50,224.25 -7.30,226.33 -6.75,228.42 -6.00,230.50" fill="none" stroke="#1c1e30" stroke-width="1.05" stroke-opacity=".85"/>
<polyline points="17.00,330.50 16.25,332.58 15.70,334.67 15.50,336.75 15.70,338.83 16.25,340.92 17.00,343.00 17.75,345.08 18.30,347.17 18.50,349.25 18.30,351.33 17.75,353.42 17.00,355.50" fill="none" stroke="#1c1e30" stroke-width="1.05" stroke-opacity=".85"/>
<polyline points="17.00,330.50 17.75,332.58 18.30,334.67 18.50,336.75 18.30,338.83 17.75,340.92 17.00,343.00 16.25,345.08 15.70,347.17 15.50,349.25 15.70,351.33 16.25,353.42 17.00,355.50" fill="none" stroke="#1c1e30" stroke-width="1.05" stroke-opacity=".85"/>
<polyline points="-6.00,330.50 -6.75,332.58 -7.30,334.67 -7.50,336.75 -7.30,338.83 -6.75,340.92 -6.00,343.00 -5.25,345.08 -4.70,347.17 -4.50,349.25 -4.70,351.33 -5.25,353.42 -6.00,355.50" fill="none" stroke="#1c1e30" stroke-width="1.05" stroke-opacity=".85"/>
<polyline points="-6.00,330.50 -5.25,332.58 -4.70,334.67 -4.50,336.75 -4.70,338.83 -5.25,340.92 -6.00,343.00 -6.75,345.08 -7.30,347.17 -7.50,349.25 -7.30,351.33 -6.75,353.42 -6.00,355.50" fill="none" stroke="#1c1e30" stroke-width="1.05" stroke-opacity=".85"/>
<use href="#fl" x="0" y="0" transform="translate(113.8 218.0)"/>
<use href="#fl" x="0" y="0" transform="translate(113.8 343.0)"/>
<use href="#fl" x="0" y="0" transform="translate(113.8 93.0)"/>
<use href="#fl" x="0" y="0" transform="translate(222.0 155.5)"/>
<use href="#fl" x="0" y="0" transform="translate(222.0 280.5)"/>
<use href="#fl" x="0" y="0" transform="translate(222.0 405.5)"/>
<use href="#fl" x="0" y="0" transform="translate(330.2 218.0)"/>
<use href="#fl" x="0" y="0" transform="translate(330.2 343.0)"/>
<use href="#fl" x="0" y="0" transform="translate(330.2 93.0)"/>
<use href="#fl" x="0" y="0" transform="translate(438.5 155.5)"/>
<use href="#fl" x="0" y="0" transform="translate(438.5 280.5)"/>
<use href="#fl" x="0" y="0" transform="translate(438.5 405.5)"/>
<use href="#fl" x="0" y="0" transform="translate(5.5 155.5)"/>
<use href="#fl" x="0" y="0" transform="translate(5.5 280.5)"/>
<use href="#fl" x="0" y="0" transform="translate(5.5 405.5)"/>
<path d="M77 400 V156.5 H365" fill="none" stroke="#22338c" stroke-width="1" stroke-opacity=".85"/>
<text x="309" y="395" text-anchor="middle" font-family="'Liberation Serif','DejaVu Serif',serif" font-weight="bold" font-size="11.5" fill="#d6d6d6" stroke="#1a1a22" stroke-width="1.9" paint-order="stroke" textLength="90" lengthAdjust="spacingAndGlyphs">www.popartstudio.nl</text>
</svg></div>
</body></html>
